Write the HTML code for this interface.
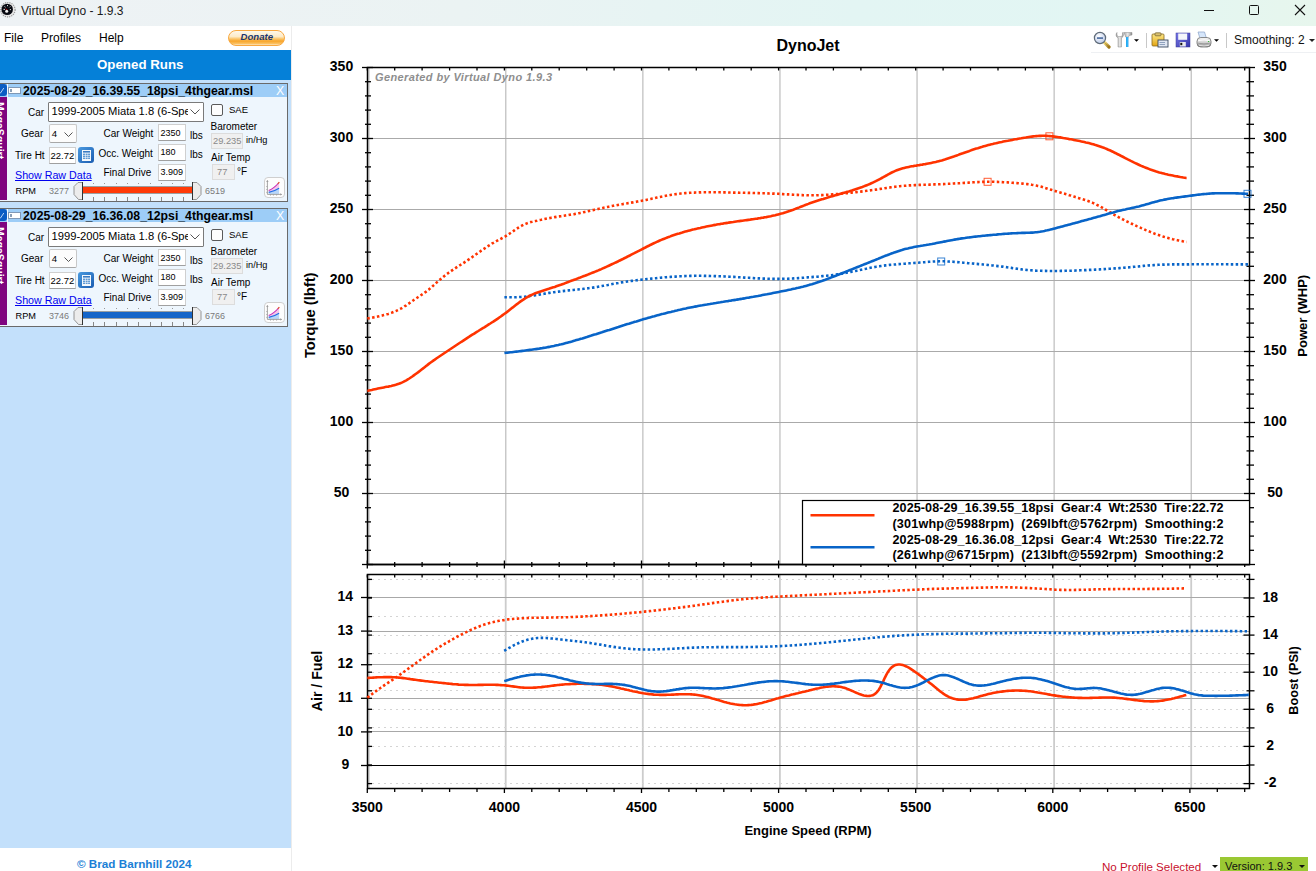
<!DOCTYPE html>
<html><head><meta charset="utf-8"><title>Virtual Dyno</title>
<style>
html,body{margin:0;padding:0;}
body{width:1316px;height:871px;overflow:hidden;position:relative;background:#fff;font-family:"Liberation Sans",sans-serif;color:#000;}
.a{position:absolute;}
.t{position:absolute;white-space:nowrap;line-height:1;}
</style></head><body>
<div class="a" style="left:0;top:0;width:1316px;height:26px;background:linear-gradient(90deg,#eef2f5 0%,#ebf3f3 35%,#e3f5f3 65%,#e2f6f3 85%,#e7f6ed 100%)"></div>
<svg class="a" style="left:0;top:0" width="17" height="20" viewBox="0 0 17 20">
 <circle cx="7.9" cy="9.7" r="7.2" fill="#e8e8e8" stroke="#9a9a9a" stroke-width="1.2" stroke-dasharray="1.2 1"/>
 <circle cx="7.2" cy="9.4" r="5.7" fill="#080a12"/>
 <path d="M3.5 9.4 H5 M4.5 6.5 L5.5 7.2 M7.5 5 V6.2 M10.3 6.5 L9.5 7.3 M11 9.6 H9.8" stroke="#d8d8d8" stroke-width="1"/>
 <path d="M5 8 L6.8 10.5 L7.6 9.8 Z" fill="#c00000"/>
 <circle cx="6.7" cy="11.2" r="1.5" fill="#f4f4f4"/>
</svg>
<div class="t" style="left:21px;top:5px;font-size:12px;color:#1a1a1a">Virtual Dyno - 1.9.3</div>
<div class="a" style="left:1204px;top:10px;width:10px;height:1px;background:#111"></div>
<div class="a" style="left:1249px;top:5px;width:8px;height:8px;border:1.2px solid #111;border-radius:1.5px"></div>
<svg class="a" style="left:1294px;top:4px" width="12" height="12" viewBox="0 0 12 12"><path d="M1 1 L11 11 M11 1 L1 11" stroke="#111" stroke-width="1.1"/></svg>
<!-- menu -->
<div class="t" style="left:4px;top:32px;font-size:12px">File</div>
<div class="t" style="left:41px;top:32px;font-size:12px">Profiles</div>
<div class="t" style="left:99px;top:32px;font-size:12px">Help</div>
<div class="a" style="left:228px;top:30px;width:57px;height:16px;border-radius:8px;background:linear-gradient(#fef8ea 0%,#fdebc8 40%,#fbc870 55%,#f8a52a 72%,#fbc060 90%,#fde6c0 100%);border:1px solid #f8a840;box-sizing:border-box"></div>
<div class="t" style="left:240.5px;top:32.2px;font-size:9.6px;font-weight:bold;font-style:italic;color:#1a3570">Donate</div>
<div class="a" style="left:291px;top:26px;width:1px;height:845px;background:#ececec"></div>
<!-- toolbar -->
<div class="a" style="left:1091px;top:52px;width:225px;height:1px;background:#eef0f3"></div>
<svg class="a" style="left:1092px;top:31px" width="20" height="18" viewBox="0 0 20 18">
 <defs><radialGradient id="mg" cx="0.4" cy="0.35" r="0.7"><stop offset="0" stop-color="#ffffff"/><stop offset="1" stop-color="#b8c8e8"/></radialGradient>
 <linearGradient id="hg" x1="0" y1="0" x2="1" y2="1"><stop offset="0" stop-color="#f5dc7a"/><stop offset="1" stop-color="#a07818"/></linearGradient></defs>
 <path d="M12.5 11.5 L17 16" stroke="url(#hg)" stroke-width="3.2" stroke-linecap="round"/>
 <path d="M12.5 11.5 L17 16" stroke="#6b5414" stroke-width="0.6" fill="none" opacity="0.5"/>
 <circle cx="8" cy="7" r="5.6" fill="url(#mg)" stroke="#5f6b78" stroke-width="1.2"/>
 <rect x="5" y="6.2" width="6" height="1.8" fill="#5a78a8"/>
</svg>
<svg class="a" style="left:1115px;top:31px" width="26" height="18" viewBox="0 0 26 18">
 <defs><linearGradient id="wg" x1="0" y1="0" x2="1" y2="0"><stop offset="0" stop-color="#9a9a9a"/><stop offset="0.5" stop-color="#e8e8e8"/><stop offset="1" stop-color="#8a8a8a"/></linearGradient></defs>
 <path d="M2 1.5 C0.5 3 0.8 6 3 7 L3 16 L6.5 16 L6.5 7 C8.7 6 9 3 7.5 1.5 L7.5 4.5 L6 5.5 L3.5 5.5 L2 4.5 Z" fill="url(#wg)" stroke="#8c8c8c" stroke-width="0.5"/>
 <path d="M8.5 1.5 L17 1.5 L17 4 L14 4.5 L13.5 6 L10.5 6 L10 4 Z" fill="url(#wg)" stroke="#8c8c8c" stroke-width="0.5"/>
 <rect x="11" y="6" width="2.4" height="10" fill="#1a8fe8"/>
 <rect x="11.6" y="6" width="1" height="10" fill="#3fd0ff"/>
 <path d="M19 8.3 L24 8.3 L21.5 10.8 Z" fill="#000"/>
</svg>
<div class="a" style="left:1146px;top:33px;width:1px;height:15px;background:#c8c8c8"></div>
<svg class="a" style="left:1151px;top:32px" width="19" height="16" viewBox="0 0 19 16">
 <defs><linearGradient id="cg" x1="0" y1="0" x2="0" y2="1"><stop offset="0" stop-color="#fde98a"/><stop offset="1" stop-color="#e2a412"/></linearGradient></defs>
 <rect x="1" y="2" width="12" height="12" rx="1" fill="url(#cg)" stroke="#8a6a20" stroke-width="0.8"/>
 <rect x="4" y="0.8" width="6" height="3" rx="0.8" fill="#d9c070" stroke="#6b5a2a" stroke-width="0.7"/>
 <rect x="7" y="8" width="10" height="7" fill="#dfe6f2" stroke="#3a4a60" stroke-width="0.9"/>
 <path d="M8.5 10.5 H14 M8.5 12.5 H14" stroke="#7a90b0" stroke-width="0.8"/>
</svg>
<svg class="a" style="left:1175px;top:32px" width="16" height="16" viewBox="0 0 16 16">
 <defs><linearGradient id="fg" x1="0" y1="0" x2="1" y2="1"><stop offset="0" stop-color="#7a7ae8"/><stop offset="1" stop-color="#3232a8"/></linearGradient></defs>
 <rect x="1" y="1" width="14" height="14" fill="url(#fg)" stroke="#3a3a98" stroke-width="0.5"/>
 <rect x="3.2" y="1.5" width="9" height="6.3" fill="#f4f6fb"/>
 <rect x="4.8" y="10" width="6" height="4.5" fill="#e8e8ee"/>
 <rect x="5.3" y="10.8" width="2" height="2.4" fill="#111"/>
</svg>
<svg class="a" style="left:1196px;top:31px" width="26" height="18" viewBox="0 0 26 18">
 <defs><linearGradient id="pg" x1="0" y1="0" x2="0" y2="1"><stop offset="0" stop-color="#f6f6f6"/><stop offset="0.5" stop-color="#d4d4d4"/><stop offset="1" stop-color="#8c8c8c"/></linearGradient></defs>
 <path d="M2 1 L8.5 1 L10.5 7.5 L4 7.5 Z" fill="#d6e6fa" stroke="#8aa2c8" stroke-width="0.7"/>
 <rect x="1" y="6.5" width="14" height="9.5" rx="3.8" fill="url(#pg)" stroke="#6e6e6e" stroke-width="0.8"/>
 <path d="M2.2 9.6 Q8 8.2 13.8 9.6" stroke="#ffffff" stroke-width="1" fill="none"/>
 <path d="M2.2 12.2 Q8 13.6 13.8 12.2" stroke="#8a8a8a" stroke-width="0.7" fill="none"/>
 <path d="M3 14.3 Q8 15.6 13 14.3" stroke="#f0f0f0" stroke-width="0.8" fill="none"/>
 <rect x="12" y="10" width="1.2" height="1" fill="#3cba3c"/>
 <path d="M18 8.3 L23 8.3 L20.5 10.8 Z" fill="#000"/>
</svg>
<div class="a" style="left:1226px;top:33px;width:1px;height:15px;background:#c8c8c8"></div>
<div class="t" style="left:1234px;top:34px;font-size:12px;color:#111">Smoothing: 2</div>
<svg class="a" style="left:1309px;top:39px" width="7" height="4" viewBox="0 0 7 4"><path d="M0 0 L6 0 L3 3 Z" fill="#222"/></svg>
<!-- status -->
<div class="t" style="left:1102px;top:861px;font-size:11.6px;color:#c8102e">No Profile Selected</div>
<svg class="a" style="left:1212px;top:865px" width="6" height="4" viewBox="0 0 6 4"><path d="M0 0 L6 0 L3 3 Z" fill="#111"/></svg>
<div class="a" style="left:1220px;top:857px;width:88px;height:14px;background:#9ac833"></div>
<div class="t" style="left:1225px;top:861px;font-size:11px;color:#111">Version: 1.9.3</div>
<svg class="a" style="left:1299px;top:865px" width="6" height="4" viewBox="0 0 6 4"><path d="M0 0 L6 0 L3 3 Z" fill="#111"/></svg>

<div class="a" style="left:0;top:50px;width:291px;height:798px;background:#c3e0fb"></div>
<div class="a" style="left:0;top:50px;width:291px;height:30px;background:#0580d8"></div>
<div class="t" style="left:97px;top:58px;font-size:13.3px;font-weight:bold;color:#fff">Opened Runs</div>
<div class="a" style="left:0;top:83px;width:287px;height:117px;background:#eef6fd;border-top:1px solid #6a6a6a;border-right:1px solid #6a6a6a;border-bottom:1px solid #6a6a6a"></div>
<div class="a" style="left:0;top:84px;width:287px;height:13px;background:#9dcdf7"></div>
<div class="t" style="left:23px;top:85px;font-size:12.25px;font-weight:bold;letter-spacing:0px">2025-08-29_16.39.55_18psi_4thgear.msl</div>
<div class="t" style="left:276px;top:85px;font-size:12.3px;color:#fff">X</div>
<div class="a" style="left:7px;top:84px;width:1px;height:13px;background:#f4f9ff"></div>
<div class="a" style="left:8.3px;top:87.2px;width:11px;height:5.2px;background:#fff;border:1px solid #7f98b6"></div>
<div class="a" style="left:10px;top:89px;width:1.5px;height:3px;background:#8aa0b8"></div>
<div class="a" style="left:0;top:84px;width:7px;height:12px;background:#0a5cc4;border-radius:0 3px 3px 0"></div>
<svg class="a" style="left:0;top:86px" width="7" height="8" viewBox="0 0 7 8"><path d="M-1 6 L0.5 7 L3.8 2" stroke="#b8d2f2" stroke-width="1" fill="none"/></svg>
<div class="a" style="left:0;top:97px;width:7px;height:103px;background:#7f047f;overflow:hidden"><div class="t" style="left:-3px;top:5px;font-size:10.5px;font-weight:bold;color:#fff;transform-origin:0 0;transform:translate(8px,0) rotate(90deg)">MegaSquirt</div></div>
<div class="t" style="left:28px;top:108px;font-size:10px">Car</div>
<div class="a" style="left:48px;top:101.5px;width:156px;height:20px;box-sizing:border-box;border:1px solid #7a7a7a;background:#fff;border-radius:1px"></div>
<div class="a" style="left:49px;top:102.5px;width:139px;height:18px;overflow:hidden"><div class="t" style="left:2.5px;top:3.3px;font-size:11.2px">1999-2005 Miata 1.8 (6-Speed)</div></div>
<svg class="a" style="left:190px;top:109px" width="10" height="6" viewBox="0 0 10 6"><path d="M0.5 0.5 L5 5 L9.5 0.5" stroke="#555" stroke-width="1" fill="none"/></svg>
<div class="a" style="left:211px;top:103.5px;width:12px;height:12px;box-sizing:border-box;border:1px solid #5a5a5a;border-radius:2px;background:#fdfdfd"></div>
<div class="t" style="left:229px;top:104.5px;font-size:9.5px">SAE</div>
<div class="t" style="left:21px;top:129px;font-size:10px">Gear</div>
<div class="a" style="left:48.5px;top:123.6px;width:28px;height:19px;box-sizing:border-box;border:1px solid #c8c8c8;border-bottom-color:#a8a8a8;background:#fcfcfc;border-radius:2px"></div>
<div class="t" style="left:51.8px;top:129.3px;font-size:9.6px">4</div>
<svg class="a" style="left:63.5px;top:131.6px" width="9" height="6" viewBox="0 0 9 6"><path d="M0.5 0.5 L4.5 4.5 L8.5 0.5" stroke="#555" stroke-width="1" fill="none"/></svg>
<div class="t" style="left:103.5px;top:129px;font-size:10px">Car Weight</div>
<div class="a" style="left:158px;top:124px;width:28px;height:16.5px;box-sizing:border-box;border:1px solid #cfcfcf;border-bottom-color:#a0a0a0;background:#fff"></div>
<div class="t" style="left:160.5px;top:128.5px;font-size:9px">2350</div>
<div class="t" style="left:190px;top:130.5px;font-size:10px">lbs</div>
<div class="t" style="left:210.5px;top:122px;font-size:10px">Barometer</div>
<div class="a" style="left:211px;top:133px;width:32px;height:16px;box-sizing:border-box;border:1px solid #dcdcdc;background:#f0f0f0"></div>
<div class="t" style="left:213px;top:137px;font-size:9.3px;color:#8a8a8a">29.235</div>
<div class="t" style="left:246px;top:135.5px;font-size:9.2px">in/Hg</div>
<div class="t" style="left:15px;top:151px;font-size:10px">Tire Ht</div>
<div class="a" style="left:48.5px;top:146.5px;width:27.5px;height:17px;box-sizing:border-box;border:1px solid #cfcfcf;border-bottom-color:#a0a0a0;background:#fff"></div>
<div class="t" style="left:50.5px;top:150.5px;font-size:9.5px">22.72</div>
<div class="a" style="left:78px;top:147px;width:16px;height:16px;border-radius:3px;background:linear-gradient(135deg,#4a9ae0,#1a5cb0);"></div>
<svg class="a" style="left:81.5px;top:149.5px" width="9" height="11" viewBox="0 0 9 11"><rect x="0" y="0" width="9" height="11" fill="#f4f8fc"/><rect x="1" y="1" width="7" height="1.6" fill="#3a7cc4"/><g fill="#4f8fd0"><rect x="1" y="3.6" width="2" height="1.3"/><rect x="3.6" y="3.6" width="2" height="1.3"/><rect x="6.1" y="3.6" width="1.9" height="1.3"/><rect x="1" y="5.6" width="2" height="1.3"/><rect x="3.6" y="5.6" width="2" height="1.3"/><rect x="6.1" y="5.6" width="1.9" height="1.3"/><rect x="1" y="7.6" width="2" height="1.3"/><rect x="3.6" y="7.6" width="2" height="1.3"/><rect x="6.1" y="7.6" width="1.9" height="1.3"/></g></svg>
<div class="t" style="left:98.5px;top:149px;font-size:10px">Occ. Weight</div>
<div class="a" style="left:158px;top:144px;width:28px;height:16.5px;box-sizing:border-box;border:1px solid #cfcfcf;border-bottom-color:#a0a0a0;background:#fff"></div>
<div class="t" style="left:160.5px;top:148px;font-size:9px">180</div>
<div class="t" style="left:190px;top:150px;font-size:10px">lbs</div>
<div class="t" style="left:211px;top:153px;font-size:10px">Air Temp</div>
<div class="a" style="left:211.5px;top:164px;width:23px;height:16px;box-sizing:border-box;border:1px solid #dcdcdc;background:#f0f0f0"></div>
<div class="t" style="left:217px;top:168px;font-size:9.3px;color:#8a8a8a">77</div>
<div class="t" style="left:237px;top:166.5px;font-size:10px">°F</div>
<div class="t" style="left:15px;top:169.5px;font-size:10.7px;color:#0000ee;text-decoration:underline">Show Raw Data</div>
<div class="t" style="left:103.5px;top:167.5px;font-size:10px">Final Drive</div>
<div class="a" style="left:158px;top:164px;width:28px;height:16.5px;box-sizing:border-box;border:1px solid #cfcfcf;border-bottom-color:#a0a0a0;background:#fff"></div>
<div class="t" style="left:160.5px;top:168px;font-size:9px">3.909</div>
<div class="t" style="left:15.5px;top:186.5px;font-size:9.2px">RPM</div>
<div class="t" style="left:49px;top:187px;font-size:9px;color:#7a7a7a">3277</div>
<div class="t" style="left:205px;top:187px;font-size:9px;color:#7a7a7a">6519</div>
<div class="a" style="left:0;top:183px;width:1px;height:1px"><div class="a" style="left:93.0px;top:0;width:1px;height:1px;background:#999"></div><div class="a" style="left:104.3px;top:0;width:1px;height:1px;background:#999"></div><div class="a" style="left:115.6px;top:0;width:1px;height:1px;background:#999"></div><div class="a" style="left:126.9px;top:0;width:1px;height:1px;background:#999"></div><div class="a" style="left:138.2px;top:0;width:1px;height:1px;background:#999"></div><div class="a" style="left:149.5px;top:0;width:1px;height:1px;background:#999"></div><div class="a" style="left:160.8px;top:0;width:1px;height:1px;background:#999"></div><div class="a" style="left:172.1px;top:0;width:1px;height:1px;background:#999"></div><div class="a" style="left:183.4px;top:0;width:1px;height:1px;background:#999"></div></div>
<div class="a" style="left:0;top:196.5px;width:1px;height:1px"><div class="a" style="left:93.0px;top:0;width:1px;height:4px;background:#888"></div><div class="a" style="left:104.3px;top:0;width:1px;height:4px;background:#888"></div><div class="a" style="left:115.6px;top:0;width:1px;height:4px;background:#888"></div><div class="a" style="left:126.9px;top:0;width:1px;height:4px;background:#888"></div><div class="a" style="left:138.2px;top:0;width:1px;height:4px;background:#888"></div><div class="a" style="left:149.5px;top:0;width:1px;height:4px;background:#888"></div><div class="a" style="left:160.8px;top:0;width:1px;height:4px;background:#888"></div><div class="a" style="left:172.1px;top:0;width:1px;height:4px;background:#888"></div><div class="a" style="left:183.4px;top:0;width:1px;height:4px;background:#888"></div></div>
<div class="a" style="left:82px;top:186.6px;width:110px;height:6.4px;background:#ff3a08;box-shadow:0 -0.6px 0 #666, 0 0.6px 0 #666"></div>
<svg class="a" style="left:73px;top:182px" width="10" height="18" viewBox="0 0 10 18"><path d="M9.5 0.5 L5 0.5 L1 4.5 L1 12.5 L5.5 17.5 L9.5 17.5" fill="#ececec" stroke="#8a8a8a" stroke-width="0.9"/><line x1="9.5" y1="0" x2="9.5" y2="18" stroke="#333" stroke-width="1"/></svg>
<svg class="a" style="left:192px;top:182px" width="10" height="18" viewBox="0 0 10 18"><path d="M0.5 0.5 L5 0.5 L9 4.5 L9 12.5 L4.5 17.5 L0.5 17.5" fill="#ececec" stroke="#8a8a8a" stroke-width="0.9"/><line x1="0.5" y1="0" x2="0.5" y2="18" stroke="#333" stroke-width="1"/></svg>
<div class="a" style="left:263.5px;top:177.3px;width:21px;height:21px;box-sizing:border-box;border:1px solid #cfcfcf;border-radius:4px;background:#fdfdfd"></div>
<svg class="a" style="left:264px;top:178px" width="21" height="21" viewBox="0 0 21 21"><path d="M4.7 12.6 Q9.4 10.8 15.1 4.5 L15.1 10.2 Q9.8 13.5 4.7 14.4 Z" fill="#f6c6ea"/><path d="M4.7 14.4 Q9.8 13.5 15.1 10.2 L15.1 16.2 L4.7 16.2 Z" fill="#b8d6f8"/><path d="M4.7 12.6 Q9.4 10.8 15.1 4.5" stroke="#c428b8" stroke-width="1.1" fill="none"/><path d="M13.8 5.9 L15.3 4.2" stroke="#e06030" stroke-width="1.2"/><path d="M4.7 14.4 Q9.8 13.5 15.1 10.2" stroke="#1f6ee8" stroke-width="1.1" fill="none"/><path d="M3.4 2.5 V16.4 H17.5" stroke="#9a9a9a" stroke-width="0.9" fill="none"/><path d="M2.2 4 L3.4 2 L4.6 4 Z M16.2 15.2 L18.2 16.4 L16.2 17.6 Z" fill="#9a9a9a"/><path d="M2.3 8.5 H3.4 M2.3 11.5 H3.4 M2.3 14.4 H3.4 M6.5 16.4 V17.6 M9.4 16.4 V17.6 M12.6 16.4 V17.6" stroke="#9a9a9a" stroke-width="0.8"/></svg>
<div class="a" style="left:0;top:208px;width:287px;height:117px;background:#eef6fd;border-top:1px solid #6a6a6a;border-right:1px solid #6a6a6a;border-bottom:1px solid #6a6a6a"></div>
<div class="a" style="left:0;top:209px;width:287px;height:13px;background:#9dcdf7"></div>
<div class="t" style="left:23px;top:210px;font-size:12.25px;font-weight:bold;letter-spacing:0px">2025-08-29_16.36.08_12psi_4thgear.msl</div>
<div class="t" style="left:276px;top:210px;font-size:12.3px;color:#fff">X</div>
<div class="a" style="left:7px;top:209px;width:1px;height:13px;background:#f4f9ff"></div>
<div class="a" style="left:8.3px;top:212.2px;width:11px;height:5.2px;background:#fff;border:1px solid #7f98b6"></div>
<div class="a" style="left:10px;top:214px;width:1.5px;height:3px;background:#8aa0b8"></div>
<div class="a" style="left:0;top:209px;width:7px;height:12px;background:#0a5cc4;border-radius:0 3px 3px 0"></div>
<svg class="a" style="left:0;top:211px" width="7" height="8" viewBox="0 0 7 8"><path d="M-1 6 L0.5 7 L3.8 2" stroke="#b8d2f2" stroke-width="1" fill="none"/></svg>
<div class="a" style="left:0;top:222px;width:7px;height:103px;background:#7f047f;overflow:hidden"><div class="t" style="left:-3px;top:5px;font-size:10.5px;font-weight:bold;color:#fff;transform-origin:0 0;transform:translate(8px,0) rotate(90deg)">MegaSquirt</div></div>
<div class="t" style="left:28px;top:233px;font-size:10px">Car</div>
<div class="a" style="left:48px;top:226.5px;width:156px;height:20px;box-sizing:border-box;border:1px solid #7a7a7a;background:#fff;border-radius:1px"></div>
<div class="a" style="left:49px;top:227.5px;width:139px;height:18px;overflow:hidden"><div class="t" style="left:2.5px;top:3.3px;font-size:11.2px">1999-2005 Miata 1.8 (6-Speed)</div></div>
<svg class="a" style="left:190px;top:234px" width="10" height="6" viewBox="0 0 10 6"><path d="M0.5 0.5 L5 5 L9.5 0.5" stroke="#555" stroke-width="1" fill="none"/></svg>
<div class="a" style="left:211px;top:228.5px;width:12px;height:12px;box-sizing:border-box;border:1px solid #5a5a5a;border-radius:2px;background:#fdfdfd"></div>
<div class="t" style="left:229px;top:229.5px;font-size:9.5px">SAE</div>
<div class="t" style="left:21px;top:254px;font-size:10px">Gear</div>
<div class="a" style="left:48.5px;top:248.6px;width:28px;height:19px;box-sizing:border-box;border:1px solid #c8c8c8;border-bottom-color:#a8a8a8;background:#fcfcfc;border-radius:2px"></div>
<div class="t" style="left:51.8px;top:254.3px;font-size:9.6px">4</div>
<svg class="a" style="left:63.5px;top:256.6px" width="9" height="6" viewBox="0 0 9 6"><path d="M0.5 0.5 L4.5 4.5 L8.5 0.5" stroke="#555" stroke-width="1" fill="none"/></svg>
<div class="t" style="left:103.5px;top:254px;font-size:10px">Car Weight</div>
<div class="a" style="left:158px;top:249px;width:28px;height:16.5px;box-sizing:border-box;border:1px solid #cfcfcf;border-bottom-color:#a0a0a0;background:#fff"></div>
<div class="t" style="left:160.5px;top:253.5px;font-size:9px">2350</div>
<div class="t" style="left:190px;top:255.5px;font-size:10px">lbs</div>
<div class="t" style="left:210.5px;top:247px;font-size:10px">Barometer</div>
<div class="a" style="left:211px;top:258px;width:32px;height:16px;box-sizing:border-box;border:1px solid #dcdcdc;background:#f0f0f0"></div>
<div class="t" style="left:213px;top:262px;font-size:9.3px;color:#8a8a8a">29.235</div>
<div class="t" style="left:246px;top:260.5px;font-size:9.2px">in/Hg</div>
<div class="t" style="left:15px;top:276px;font-size:10px">Tire Ht</div>
<div class="a" style="left:48.5px;top:271.5px;width:27.5px;height:17px;box-sizing:border-box;border:1px solid #cfcfcf;border-bottom-color:#a0a0a0;background:#fff"></div>
<div class="t" style="left:50.5px;top:275.5px;font-size:9.5px">22.72</div>
<div class="a" style="left:78px;top:272px;width:16px;height:16px;border-radius:3px;background:linear-gradient(135deg,#4a9ae0,#1a5cb0);"></div>
<svg class="a" style="left:81.5px;top:274.5px" width="9" height="11" viewBox="0 0 9 11"><rect x="0" y="0" width="9" height="11" fill="#f4f8fc"/><rect x="1" y="1" width="7" height="1.6" fill="#3a7cc4"/><g fill="#4f8fd0"><rect x="1" y="3.6" width="2" height="1.3"/><rect x="3.6" y="3.6" width="2" height="1.3"/><rect x="6.1" y="3.6" width="1.9" height="1.3"/><rect x="1" y="5.6" width="2" height="1.3"/><rect x="3.6" y="5.6" width="2" height="1.3"/><rect x="6.1" y="5.6" width="1.9" height="1.3"/><rect x="1" y="7.6" width="2" height="1.3"/><rect x="3.6" y="7.6" width="2" height="1.3"/><rect x="6.1" y="7.6" width="1.9" height="1.3"/></g></svg>
<div class="t" style="left:98.5px;top:274px;font-size:10px">Occ. Weight</div>
<div class="a" style="left:158px;top:269px;width:28px;height:16.5px;box-sizing:border-box;border:1px solid #cfcfcf;border-bottom-color:#a0a0a0;background:#fff"></div>
<div class="t" style="left:160.5px;top:273px;font-size:9px">180</div>
<div class="t" style="left:190px;top:275px;font-size:10px">lbs</div>
<div class="t" style="left:211px;top:278px;font-size:10px">Air Temp</div>
<div class="a" style="left:211.5px;top:289px;width:23px;height:16px;box-sizing:border-box;border:1px solid #dcdcdc;background:#f0f0f0"></div>
<div class="t" style="left:217px;top:293px;font-size:9.3px;color:#8a8a8a">77</div>
<div class="t" style="left:237px;top:291.5px;font-size:10px">°F</div>
<div class="t" style="left:15px;top:294.5px;font-size:10.7px;color:#0000ee;text-decoration:underline">Show Raw Data</div>
<div class="t" style="left:103.5px;top:292.5px;font-size:10px">Final Drive</div>
<div class="a" style="left:158px;top:289px;width:28px;height:16.5px;box-sizing:border-box;border:1px solid #cfcfcf;border-bottom-color:#a0a0a0;background:#fff"></div>
<div class="t" style="left:160.5px;top:293px;font-size:9px">3.909</div>
<div class="t" style="left:15.5px;top:311.5px;font-size:9.2px">RPM</div>
<div class="t" style="left:49px;top:312px;font-size:9px;color:#7a7a7a">3746</div>
<div class="t" style="left:205px;top:312px;font-size:9px;color:#7a7a7a">6766</div>
<div class="a" style="left:0;top:308px;width:1px;height:1px"><div class="a" style="left:93.0px;top:0;width:1px;height:1px;background:#999"></div><div class="a" style="left:104.3px;top:0;width:1px;height:1px;background:#999"></div><div class="a" style="left:115.6px;top:0;width:1px;height:1px;background:#999"></div><div class="a" style="left:126.9px;top:0;width:1px;height:1px;background:#999"></div><div class="a" style="left:138.2px;top:0;width:1px;height:1px;background:#999"></div><div class="a" style="left:149.5px;top:0;width:1px;height:1px;background:#999"></div><div class="a" style="left:160.8px;top:0;width:1px;height:1px;background:#999"></div><div class="a" style="left:172.1px;top:0;width:1px;height:1px;background:#999"></div><div class="a" style="left:183.4px;top:0;width:1px;height:1px;background:#999"></div></div>
<div class="a" style="left:0;top:321.5px;width:1px;height:1px"><div class="a" style="left:93.0px;top:0;width:1px;height:4px;background:#888"></div><div class="a" style="left:104.3px;top:0;width:1px;height:4px;background:#888"></div><div class="a" style="left:115.6px;top:0;width:1px;height:4px;background:#888"></div><div class="a" style="left:126.9px;top:0;width:1px;height:4px;background:#888"></div><div class="a" style="left:138.2px;top:0;width:1px;height:4px;background:#888"></div><div class="a" style="left:149.5px;top:0;width:1px;height:4px;background:#888"></div><div class="a" style="left:160.8px;top:0;width:1px;height:4px;background:#888"></div><div class="a" style="left:172.1px;top:0;width:1px;height:4px;background:#888"></div><div class="a" style="left:183.4px;top:0;width:1px;height:4px;background:#888"></div></div>
<div class="a" style="left:82px;top:311.6px;width:110px;height:6.4px;background:#1565c8;box-shadow:0 -0.6px 0 #666, 0 0.6px 0 #666"></div>
<svg class="a" style="left:73px;top:307px" width="10" height="18" viewBox="0 0 10 18"><path d="M9.5 0.5 L5 0.5 L1 4.5 L1 12.5 L5.5 17.5 L9.5 17.5" fill="#ececec" stroke="#8a8a8a" stroke-width="0.9"/><line x1="9.5" y1="0" x2="9.5" y2="18" stroke="#333" stroke-width="1"/></svg>
<svg class="a" style="left:192px;top:307px" width="10" height="18" viewBox="0 0 10 18"><path d="M0.5 0.5 L5 0.5 L9 4.5 L9 12.5 L4.5 17.5 L0.5 17.5" fill="#ececec" stroke="#8a8a8a" stroke-width="0.9"/><line x1="0.5" y1="0" x2="0.5" y2="18" stroke="#333" stroke-width="1"/></svg>
<div class="a" style="left:263.5px;top:302.3px;width:21px;height:21px;box-sizing:border-box;border:1px solid #cfcfcf;border-radius:4px;background:#fdfdfd"></div>
<svg class="a" style="left:264px;top:303px" width="21" height="21" viewBox="0 0 21 21"><path d="M4.7 12.6 Q9.4 10.8 15.1 4.5 L15.1 10.2 Q9.8 13.5 4.7 14.4 Z" fill="#f6c6ea"/><path d="M4.7 14.4 Q9.8 13.5 15.1 10.2 L15.1 16.2 L4.7 16.2 Z" fill="#b8d6f8"/><path d="M4.7 12.6 Q9.4 10.8 15.1 4.5" stroke="#c428b8" stroke-width="1.1" fill="none"/><path d="M13.8 5.9 L15.3 4.2" stroke="#e06030" stroke-width="1.2"/><path d="M4.7 14.4 Q9.8 13.5 15.1 10.2" stroke="#1f6ee8" stroke-width="1.1" fill="none"/><path d="M3.4 2.5 V16.4 H17.5" stroke="#9a9a9a" stroke-width="0.9" fill="none"/><path d="M2.2 4 L3.4 2 L4.6 4 Z M16.2 15.2 L18.2 16.4 L16.2 17.6 Z" fill="#9a9a9a"/><path d="M2.3 8.5 H3.4 M2.3 11.5 H3.4 M2.3 14.4 H3.4 M6.5 16.4 V17.6 M9.4 16.4 V17.6 M12.6 16.4 V17.6" stroke="#9a9a9a" stroke-width="0.8"/></svg>
<div class="t" style="left:77px;top:858px;font-size:11.7px;font-weight:bold;color:#1b7fd6">© Brad Barnhill 2024</div>
<svg class="a" style="left:0;top:0" width="1316" height="871" viewBox="0 0 1316 871">
<line x1="505.75" y1="67.5" x2="505.75" y2="564.5" stroke="#c6c6c6" stroke-width="1.4"/>
<line x1="642.85" y1="67.5" x2="642.85" y2="564.5" stroke="#c6c6c6" stroke-width="1.4"/>
<line x1="779.95" y1="67.5" x2="779.95" y2="564.5" stroke="#c6c6c6" stroke-width="1.4"/>
<line x1="917.05" y1="67.5" x2="917.05" y2="564.5" stroke="#c6c6c6" stroke-width="1.4"/>
<line x1="1054.15" y1="67.5" x2="1054.15" y2="564.5" stroke="#c6c6c6" stroke-width="1.4"/>
<line x1="1191.25" y1="67.5" x2="1191.25" y2="564.5" stroke="#c6c6c6" stroke-width="1.4"/>
<line x1="367.5" y1="493.5" x2="1249.5" y2="493.5" stroke="#aaaaaa" stroke-width="1.2"/>
<line x1="367.5" y1="422.5" x2="1249.5" y2="422.5" stroke="#aaaaaa" stroke-width="1.2"/>
<line x1="367.5" y1="351.5" x2="1249.5" y2="351.5" stroke="#aaaaaa" stroke-width="1.2"/>
<line x1="367.5" y1="280.5" x2="1249.5" y2="280.5" stroke="#aaaaaa" stroke-width="1.2"/>
<line x1="367.5" y1="209.5" x2="1249.5" y2="209.5" stroke="#aaaaaa" stroke-width="1.2"/>
<line x1="367.5" y1="138.5" x2="1249.5" y2="138.5" stroke="#aaaaaa" stroke-width="1.2"/>
<line x1="367.5" y1="67.5" x2="1249.5" y2="67.5" stroke="#aaaaaa" stroke-width="1.2"/>
<line x1="369.0" y1="67.5" x2="369.0" y2="564.5" stroke="#dcdcdc" stroke-width="2"/>
<line x1="362" y1="564.5" x2="373" y2="564.5" stroke="#000" stroke-width="1.3"/>
<line x1="1244" y1="564.5" x2="1255" y2="564.5" stroke="#000" stroke-width="1.3"/>
<line x1="365" y1="550.3" x2="371" y2="550.3" stroke="#000" stroke-width="1.3"/>
<line x1="1246.5" y1="550.3" x2="1254" y2="550.3" stroke="#000" stroke-width="1.3"/>
<line x1="365" y1="536.1" x2="371" y2="536.1" stroke="#000" stroke-width="1.3"/>
<line x1="1246.5" y1="536.1" x2="1254" y2="536.1" stroke="#000" stroke-width="1.3"/>
<line x1="365" y1="521.9" x2="371" y2="521.9" stroke="#000" stroke-width="1.3"/>
<line x1="1246.5" y1="521.9" x2="1254" y2="521.9" stroke="#000" stroke-width="1.3"/>
<line x1="365" y1="507.7" x2="371" y2="507.7" stroke="#000" stroke-width="1.3"/>
<line x1="1246.5" y1="507.7" x2="1254" y2="507.7" stroke="#000" stroke-width="1.3"/>
<line x1="362" y1="493.5" x2="373" y2="493.5" stroke="#000" stroke-width="1.3"/>
<line x1="1244" y1="493.5" x2="1255" y2="493.5" stroke="#000" stroke-width="1.3"/>
<line x1="365" y1="479.3" x2="371" y2="479.3" stroke="#000" stroke-width="1.3"/>
<line x1="1246.5" y1="479.3" x2="1254" y2="479.3" stroke="#000" stroke-width="1.3"/>
<line x1="365" y1="465.1" x2="371" y2="465.1" stroke="#000" stroke-width="1.3"/>
<line x1="1246.5" y1="465.1" x2="1254" y2="465.1" stroke="#000" stroke-width="1.3"/>
<line x1="365" y1="450.9" x2="371" y2="450.9" stroke="#000" stroke-width="1.3"/>
<line x1="1246.5" y1="450.9" x2="1254" y2="450.9" stroke="#000" stroke-width="1.3"/>
<line x1="365" y1="436.7" x2="371" y2="436.7" stroke="#000" stroke-width="1.3"/>
<line x1="1246.5" y1="436.7" x2="1254" y2="436.7" stroke="#000" stroke-width="1.3"/>
<line x1="362" y1="422.5" x2="373" y2="422.5" stroke="#000" stroke-width="1.3"/>
<line x1="1244" y1="422.5" x2="1255" y2="422.5" stroke="#000" stroke-width="1.3"/>
<line x1="365" y1="408.3" x2="371" y2="408.3" stroke="#000" stroke-width="1.3"/>
<line x1="1246.5" y1="408.3" x2="1254" y2="408.3" stroke="#000" stroke-width="1.3"/>
<line x1="365" y1="394.1" x2="371" y2="394.1" stroke="#000" stroke-width="1.3"/>
<line x1="1246.5" y1="394.1" x2="1254" y2="394.1" stroke="#000" stroke-width="1.3"/>
<line x1="365" y1="379.9" x2="371" y2="379.9" stroke="#000" stroke-width="1.3"/>
<line x1="1246.5" y1="379.9" x2="1254" y2="379.9" stroke="#000" stroke-width="1.3"/>
<line x1="365" y1="365.7" x2="371" y2="365.7" stroke="#000" stroke-width="1.3"/>
<line x1="1246.5" y1="365.7" x2="1254" y2="365.7" stroke="#000" stroke-width="1.3"/>
<line x1="362" y1="351.5" x2="373" y2="351.5" stroke="#000" stroke-width="1.3"/>
<line x1="1244" y1="351.5" x2="1255" y2="351.5" stroke="#000" stroke-width="1.3"/>
<line x1="365" y1="337.3" x2="371" y2="337.3" stroke="#000" stroke-width="1.3"/>
<line x1="1246.5" y1="337.3" x2="1254" y2="337.3" stroke="#000" stroke-width="1.3"/>
<line x1="365" y1="323.1" x2="371" y2="323.1" stroke="#000" stroke-width="1.3"/>
<line x1="1246.5" y1="323.1" x2="1254" y2="323.1" stroke="#000" stroke-width="1.3"/>
<line x1="365" y1="308.9" x2="371" y2="308.9" stroke="#000" stroke-width="1.3"/>
<line x1="1246.5" y1="308.9" x2="1254" y2="308.9" stroke="#000" stroke-width="1.3"/>
<line x1="365" y1="294.7" x2="371" y2="294.7" stroke="#000" stroke-width="1.3"/>
<line x1="1246.5" y1="294.7" x2="1254" y2="294.7" stroke="#000" stroke-width="1.3"/>
<line x1="362" y1="280.5" x2="373" y2="280.5" stroke="#000" stroke-width="1.3"/>
<line x1="1244" y1="280.5" x2="1255" y2="280.5" stroke="#000" stroke-width="1.3"/>
<line x1="365" y1="266.3" x2="371" y2="266.3" stroke="#000" stroke-width="1.3"/>
<line x1="1246.5" y1="266.3" x2="1254" y2="266.3" stroke="#000" stroke-width="1.3"/>
<line x1="365" y1="252.1" x2="371" y2="252.1" stroke="#000" stroke-width="1.3"/>
<line x1="1246.5" y1="252.1" x2="1254" y2="252.1" stroke="#000" stroke-width="1.3"/>
<line x1="365" y1="237.9" x2="371" y2="237.9" stroke="#000" stroke-width="1.3"/>
<line x1="1246.5" y1="237.9" x2="1254" y2="237.9" stroke="#000" stroke-width="1.3"/>
<line x1="365" y1="223.7" x2="371" y2="223.7" stroke="#000" stroke-width="1.3"/>
<line x1="1246.5" y1="223.7" x2="1254" y2="223.7" stroke="#000" stroke-width="1.3"/>
<line x1="362" y1="209.5" x2="373" y2="209.5" stroke="#000" stroke-width="1.3"/>
<line x1="1244" y1="209.5" x2="1255" y2="209.5" stroke="#000" stroke-width="1.3"/>
<line x1="365" y1="195.3" x2="371" y2="195.3" stroke="#000" stroke-width="1.3"/>
<line x1="1246.5" y1="195.3" x2="1254" y2="195.3" stroke="#000" stroke-width="1.3"/>
<line x1="365" y1="181.1" x2="371" y2="181.1" stroke="#000" stroke-width="1.3"/>
<line x1="1246.5" y1="181.1" x2="1254" y2="181.1" stroke="#000" stroke-width="1.3"/>
<line x1="365" y1="166.9" x2="371" y2="166.9" stroke="#000" stroke-width="1.3"/>
<line x1="1246.5" y1="166.9" x2="1254" y2="166.9" stroke="#000" stroke-width="1.3"/>
<line x1="365" y1="152.7" x2="371" y2="152.7" stroke="#000" stroke-width="1.3"/>
<line x1="1246.5" y1="152.7" x2="1254" y2="152.7" stroke="#000" stroke-width="1.3"/>
<line x1="362" y1="138.5" x2="373" y2="138.5" stroke="#000" stroke-width="1.3"/>
<line x1="1244" y1="138.5" x2="1255" y2="138.5" stroke="#000" stroke-width="1.3"/>
<line x1="365" y1="124.3" x2="371" y2="124.3" stroke="#000" stroke-width="1.3"/>
<line x1="1246.5" y1="124.3" x2="1254" y2="124.3" stroke="#000" stroke-width="1.3"/>
<line x1="365" y1="110.1" x2="371" y2="110.1" stroke="#000" stroke-width="1.3"/>
<line x1="1246.5" y1="110.1" x2="1254" y2="110.1" stroke="#000" stroke-width="1.3"/>
<line x1="365" y1="95.9" x2="371" y2="95.9" stroke="#000" stroke-width="1.3"/>
<line x1="1246.5" y1="95.9" x2="1254" y2="95.9" stroke="#000" stroke-width="1.3"/>
<line x1="365" y1="81.7" x2="371" y2="81.7" stroke="#000" stroke-width="1.3"/>
<line x1="1246.5" y1="81.7" x2="1254" y2="81.7" stroke="#000" stroke-width="1.3"/>
<line x1="362" y1="67.5" x2="373" y2="67.5" stroke="#000" stroke-width="1.3"/>
<line x1="1244" y1="67.5" x2="1255" y2="67.5" stroke="#000" stroke-width="1.3"/>
<line x1="367.3" y1="67.5" x2="367.3" y2="70.5" stroke="#000" stroke-width="1.3"/>
<line x1="367.3" y1="560.5" x2="367.3" y2="568.5" stroke="#000" stroke-width="1.3"/>
<line x1="394.7" y1="67.5" x2="394.7" y2="70.5" stroke="#000" stroke-width="1.3"/>
<line x1="394.7" y1="562.0" x2="394.7" y2="567.0" stroke="#000" stroke-width="1.3"/>
<line x1="422.1" y1="67.5" x2="422.1" y2="70.5" stroke="#000" stroke-width="1.3"/>
<line x1="422.1" y1="562.0" x2="422.1" y2="567.0" stroke="#000" stroke-width="1.3"/>
<line x1="449.6" y1="67.5" x2="449.6" y2="70.5" stroke="#000" stroke-width="1.3"/>
<line x1="449.6" y1="562.0" x2="449.6" y2="567.0" stroke="#000" stroke-width="1.3"/>
<line x1="477.0" y1="67.5" x2="477.0" y2="70.5" stroke="#000" stroke-width="1.3"/>
<line x1="477.0" y1="562.0" x2="477.0" y2="567.0" stroke="#000" stroke-width="1.3"/>
<line x1="504.4" y1="67.5" x2="504.4" y2="70.5" stroke="#000" stroke-width="1.3"/>
<line x1="504.4" y1="560.5" x2="504.4" y2="568.5" stroke="#000" stroke-width="1.3"/>
<line x1="531.8" y1="67.5" x2="531.8" y2="70.5" stroke="#000" stroke-width="1.3"/>
<line x1="531.8" y1="562.0" x2="531.8" y2="567.0" stroke="#000" stroke-width="1.3"/>
<line x1="559.2" y1="67.5" x2="559.2" y2="70.5" stroke="#000" stroke-width="1.3"/>
<line x1="559.2" y1="562.0" x2="559.2" y2="567.0" stroke="#000" stroke-width="1.3"/>
<line x1="586.7" y1="67.5" x2="586.7" y2="70.5" stroke="#000" stroke-width="1.3"/>
<line x1="586.7" y1="562.0" x2="586.7" y2="567.0" stroke="#000" stroke-width="1.3"/>
<line x1="614.1" y1="67.5" x2="614.1" y2="70.5" stroke="#000" stroke-width="1.3"/>
<line x1="614.1" y1="562.0" x2="614.1" y2="567.0" stroke="#000" stroke-width="1.3"/>
<line x1="641.5" y1="67.5" x2="641.5" y2="70.5" stroke="#000" stroke-width="1.3"/>
<line x1="641.5" y1="560.5" x2="641.5" y2="568.5" stroke="#000" stroke-width="1.3"/>
<line x1="668.9" y1="67.5" x2="668.9" y2="70.5" stroke="#000" stroke-width="1.3"/>
<line x1="668.9" y1="562.0" x2="668.9" y2="567.0" stroke="#000" stroke-width="1.3"/>
<line x1="696.3" y1="67.5" x2="696.3" y2="70.5" stroke="#000" stroke-width="1.3"/>
<line x1="696.3" y1="562.0" x2="696.3" y2="567.0" stroke="#000" stroke-width="1.3"/>
<line x1="723.8" y1="67.5" x2="723.8" y2="70.5" stroke="#000" stroke-width="1.3"/>
<line x1="723.8" y1="562.0" x2="723.8" y2="567.0" stroke="#000" stroke-width="1.3"/>
<line x1="751.2" y1="67.5" x2="751.2" y2="70.5" stroke="#000" stroke-width="1.3"/>
<line x1="751.2" y1="562.0" x2="751.2" y2="567.0" stroke="#000" stroke-width="1.3"/>
<line x1="778.6" y1="67.5" x2="778.6" y2="70.5" stroke="#000" stroke-width="1.3"/>
<line x1="778.6" y1="560.5" x2="778.6" y2="568.5" stroke="#000" stroke-width="1.3"/>
<line x1="806.0" y1="67.5" x2="806.0" y2="70.5" stroke="#000" stroke-width="1.3"/>
<line x1="806.0" y1="562.0" x2="806.0" y2="567.0" stroke="#000" stroke-width="1.3"/>
<line x1="833.4" y1="67.5" x2="833.4" y2="70.5" stroke="#000" stroke-width="1.3"/>
<line x1="833.4" y1="562.0" x2="833.4" y2="567.0" stroke="#000" stroke-width="1.3"/>
<line x1="860.9" y1="67.5" x2="860.9" y2="70.5" stroke="#000" stroke-width="1.3"/>
<line x1="860.9" y1="562.0" x2="860.9" y2="567.0" stroke="#000" stroke-width="1.3"/>
<line x1="888.3" y1="67.5" x2="888.3" y2="70.5" stroke="#000" stroke-width="1.3"/>
<line x1="888.3" y1="562.0" x2="888.3" y2="567.0" stroke="#000" stroke-width="1.3"/>
<line x1="915.7" y1="67.5" x2="915.7" y2="70.5" stroke="#000" stroke-width="1.3"/>
<line x1="915.7" y1="560.5" x2="915.7" y2="568.5" stroke="#000" stroke-width="1.3"/>
<line x1="943.1" y1="67.5" x2="943.1" y2="70.5" stroke="#000" stroke-width="1.3"/>
<line x1="943.1" y1="562.0" x2="943.1" y2="567.0" stroke="#000" stroke-width="1.3"/>
<line x1="970.5" y1="67.5" x2="970.5" y2="70.5" stroke="#000" stroke-width="1.3"/>
<line x1="970.5" y1="562.0" x2="970.5" y2="567.0" stroke="#000" stroke-width="1.3"/>
<line x1="998.0" y1="67.5" x2="998.0" y2="70.5" stroke="#000" stroke-width="1.3"/>
<line x1="998.0" y1="562.0" x2="998.0" y2="567.0" stroke="#000" stroke-width="1.3"/>
<line x1="1025.4" y1="67.5" x2="1025.4" y2="70.5" stroke="#000" stroke-width="1.3"/>
<line x1="1025.4" y1="562.0" x2="1025.4" y2="567.0" stroke="#000" stroke-width="1.3"/>
<line x1="1052.8" y1="67.5" x2="1052.8" y2="70.5" stroke="#000" stroke-width="1.3"/>
<line x1="1052.8" y1="560.5" x2="1052.8" y2="568.5" stroke="#000" stroke-width="1.3"/>
<line x1="1080.2" y1="67.5" x2="1080.2" y2="70.5" stroke="#000" stroke-width="1.3"/>
<line x1="1080.2" y1="562.0" x2="1080.2" y2="567.0" stroke="#000" stroke-width="1.3"/>
<line x1="1107.6" y1="67.5" x2="1107.6" y2="70.5" stroke="#000" stroke-width="1.3"/>
<line x1="1107.6" y1="562.0" x2="1107.6" y2="567.0" stroke="#000" stroke-width="1.3"/>
<line x1="1135.1" y1="67.5" x2="1135.1" y2="70.5" stroke="#000" stroke-width="1.3"/>
<line x1="1135.1" y1="562.0" x2="1135.1" y2="567.0" stroke="#000" stroke-width="1.3"/>
<line x1="1162.5" y1="67.5" x2="1162.5" y2="70.5" stroke="#000" stroke-width="1.3"/>
<line x1="1162.5" y1="562.0" x2="1162.5" y2="567.0" stroke="#000" stroke-width="1.3"/>
<line x1="1189.9" y1="67.5" x2="1189.9" y2="70.5" stroke="#000" stroke-width="1.3"/>
<line x1="1189.9" y1="560.5" x2="1189.9" y2="568.5" stroke="#000" stroke-width="1.3"/>
<line x1="1217.3" y1="67.5" x2="1217.3" y2="70.5" stroke="#000" stroke-width="1.3"/>
<line x1="1217.3" y1="562.0" x2="1217.3" y2="567.0" stroke="#000" stroke-width="1.3"/>
<line x1="1244.7" y1="67.5" x2="1244.7" y2="70.5" stroke="#000" stroke-width="1.3"/>
<line x1="1244.7" y1="562.0" x2="1244.7" y2="567.0" stroke="#000" stroke-width="1.3"/>
<rect x="367.5" y="67.5" width="882.0" height="497.0" fill="none" stroke="#000" stroke-width="1.5"/>
<text x="375" y="81" font-family="Liberation Sans" font-style="italic" font-weight="bold" font-size="11" fill="#8e8e8e" textLength="177" lengthAdjust="spacing">Generated by Virtual Dyno 1.9.3</text>
<text x="341.5" y="496.9" text-anchor="middle" font-family="Liberation Sans" font-weight="bold" font-size="14">50</text>
<text x="1275" y="496.9" text-anchor="middle" font-family="Liberation Sans" font-weight="bold" font-size="14">50</text>
<text x="341.5" y="425.9" text-anchor="middle" font-family="Liberation Sans" font-weight="bold" font-size="14">100</text>
<text x="1275" y="425.9" text-anchor="middle" font-family="Liberation Sans" font-weight="bold" font-size="14">100</text>
<text x="341.5" y="354.9" text-anchor="middle" font-family="Liberation Sans" font-weight="bold" font-size="14">150</text>
<text x="1275" y="354.9" text-anchor="middle" font-family="Liberation Sans" font-weight="bold" font-size="14">150</text>
<text x="341.5" y="283.9" text-anchor="middle" font-family="Liberation Sans" font-weight="bold" font-size="14">200</text>
<text x="1275" y="283.9" text-anchor="middle" font-family="Liberation Sans" font-weight="bold" font-size="14">200</text>
<text x="341.5" y="212.9" text-anchor="middle" font-family="Liberation Sans" font-weight="bold" font-size="14">250</text>
<text x="1275" y="212.9" text-anchor="middle" font-family="Liberation Sans" font-weight="bold" font-size="14">250</text>
<text x="341.5" y="141.9" text-anchor="middle" font-family="Liberation Sans" font-weight="bold" font-size="14">300</text>
<text x="1275" y="141.9" text-anchor="middle" font-family="Liberation Sans" font-weight="bold" font-size="14">300</text>
<text x="341.5" y="70.9" text-anchor="middle" font-family="Liberation Sans" font-weight="bold" font-size="14">350</text>
<text x="1275" y="70.9" text-anchor="middle" font-family="Liberation Sans" font-weight="bold" font-size="14">350</text>
<text transform="translate(315.2,315.3) rotate(-90)" x="-42.75" font-family="Liberation Sans" font-weight="bold" font-size="15.3" textLength="85.5" lengthAdjust="spacingAndGlyphs">Torque (lbft)</text>
<text transform="translate(1307.3,315.8) rotate(-90)" x="-41" font-family="Liberation Sans" font-weight="bold" font-size="13.6" textLength="82" lengthAdjust="spacingAndGlyphs">Power (WHP)</text>
<text x="808" y="51" text-anchor="middle" font-family="Liberation Sans" font-weight="bold" font-size="16">DynoJet</text>
<path d="M367.3,318.6 L368.8,318.3 L370.3,318.0 L371.8,317.7 L373.3,317.4 L374.8,317.1 L376.3,316.8 L377.8,316.5 L379.3,316.2 L380.8,315.8 L382.3,315.5 L383.8,315.1 L385.3,314.7 L386.8,314.3 L388.3,313.9 L389.8,313.4 L391.3,312.9 L392.8,312.3 L394.3,311.7 L395.8,311.1 L397.3,310.4 L398.8,309.7 L400.3,308.9 L401.8,308.1 L403.3,307.2 L404.8,306.2 L406.3,305.3 L407.8,304.2 L409.3,303.2 L410.8,302.1 L412.3,301.1 L413.8,300.0 L415.3,299.0 L416.8,298.0 L418.3,297.0 L419.8,296.0 L421.3,295.0 L422.8,294.0 L424.3,292.9 L425.8,291.9 L427.3,290.7 L428.8,289.6 L430.3,288.3 L431.8,287.0 L433.3,285.6 L434.8,284.3 L436.3,282.9 L437.8,281.5 L439.3,280.2 L440.8,278.9 L442.3,277.7 L443.8,276.4 L445.3,275.3 L446.8,274.1 L448.3,273.0 L449.8,271.9 L451.3,270.9 L452.8,269.9 L454.3,268.9 L455.8,267.9 L457.3,266.9 L458.8,266.0 L460.3,265.0 L461.8,264.1 L463.3,263.1 L464.8,262.1 L466.3,261.1 L467.8,260.1 L469.3,259.1 L470.8,258.1 L472.3,257.0 L473.8,256.0 L475.3,254.9 L476.8,253.8 L478.3,252.8 L479.8,251.7 L481.3,250.6 L482.8,249.6 L484.3,248.6 L485.8,247.6 L487.3,246.6 L488.8,245.6 L490.3,244.7 L491.8,243.7 L493.3,242.9 L494.8,242.0 L496.3,241.2 L497.8,240.4 L499.3,239.6 L500.8,238.8 L502.3,238.0 L503.8,237.2 L505.3,236.4 L506.8,235.4 L508.3,234.5 L509.8,233.5 L511.3,232.5 L512.8,231.5 L514.3,230.4 L515.8,229.4 L517.3,228.4 L518.8,227.4 L520.3,226.5 L521.8,225.7 L523.3,224.9 L524.8,224.2 L526.3,223.6 L527.8,223.0 L529.3,222.6 L530.8,222.1 L532.3,221.8 L533.8,221.4 L535.3,221.1 L536.8,220.8 L538.3,220.4 L539.8,220.1 L541.3,219.8 L542.8,219.4 L544.3,219.1 L545.8,218.8 L547.3,218.5 L548.8,218.2 L550.3,217.9 L551.8,217.6 L553.3,217.4 L554.8,217.1 L556.3,216.9 L557.8,216.6 L559.3,216.4 L560.8,216.2 L562.3,216.0 L563.8,215.8 L565.3,215.5 L566.8,215.3 L568.3,215.1 L569.8,214.8 L571.3,214.6 L572.8,214.3 L574.3,214.1 L575.8,213.8 L577.3,213.5 L578.8,213.2 L580.3,212.9 L581.8,212.6 L583.3,212.2 L584.8,211.9 L586.3,211.6 L587.8,211.2 L589.3,210.9 L590.8,210.6 L592.3,210.2 L593.8,209.9 L595.3,209.5 L596.8,209.2 L598.3,208.9 L599.8,208.6 L601.3,208.2 L602.8,207.9 L604.3,207.6 L605.8,207.3 L607.3,207.0 L608.8,206.7 L610.3,206.4 L611.8,206.1 L613.3,205.8 L614.8,205.5 L616.3,205.3 L617.8,205.0 L619.3,204.7 L620.8,204.4 L622.3,204.2 L623.8,203.9 L625.3,203.7 L626.8,203.4 L628.3,203.1 L629.8,202.9 L631.3,202.6 L632.8,202.4 L634.3,202.1 L635.8,201.9 L637.3,201.6 L638.8,201.3 L640.3,201.0 L641.8,200.7 L643.3,200.5 L644.8,200.2 L646.3,199.9 L647.8,199.5 L649.3,199.2 L650.8,198.9 L652.3,198.6 L653.8,198.3 L655.3,197.9 L656.8,197.6 L658.3,197.3 L659.8,197.0 L661.3,196.7 L662.8,196.4 L664.3,196.1 L665.8,195.8 L667.3,195.5 L668.8,195.3 L670.3,195.0 L671.8,194.7 L673.3,194.5 L674.8,194.3 L676.3,194.1 L677.8,193.9 L679.3,193.7 L680.8,193.5 L682.3,193.4 L683.8,193.3 L685.3,193.1 L686.8,193.0 L688.3,192.9 L689.8,192.8 L691.3,192.7 L692.8,192.6 L694.3,192.6 L695.8,192.5 L697.3,192.5 L698.8,192.4 L700.3,192.4 L701.8,192.3 L703.3,192.3 L704.8,192.3 L706.3,192.3 L707.8,192.3 L709.3,192.3 L710.8,192.3 L712.3,192.3 L713.8,192.3 L715.3,192.3 L716.8,192.3 L718.3,192.3 L719.8,192.3 L721.3,192.4 L722.8,192.4 L724.3,192.4 L725.8,192.4 L727.3,192.4 L728.8,192.5 L730.3,192.5 L731.8,192.5 L733.3,192.6 L734.8,192.6 L736.3,192.6 L737.8,192.6 L739.3,192.7 L740.8,192.7 L742.3,192.7 L743.8,192.8 L745.3,192.8 L746.8,192.8 L748.3,192.9 L749.8,192.9 L751.3,192.9 L752.8,193.0 L754.3,193.0 L755.8,193.0 L757.3,193.1 L758.8,193.1 L760.3,193.2 L761.8,193.2 L763.3,193.2 L764.8,193.3 L766.3,193.3 L767.8,193.4 L769.3,193.5 L770.8,193.5 L772.3,193.6 L773.8,193.6 L775.3,193.7 L776.8,193.8 L778.3,193.8 L779.8,193.9 L781.3,194.0 L782.8,194.1 L784.3,194.2 L785.8,194.3 L787.3,194.4 L788.8,194.4 L790.3,194.5 L791.8,194.6 L793.3,194.7 L794.8,194.8 L796.3,194.9 L797.8,194.9 L799.3,195.0 L800.8,195.1 L802.3,195.1 L803.8,195.2 L805.3,195.2 L806.8,195.3 L808.3,195.3 L809.8,195.3 L811.3,195.3 L812.8,195.3 L814.3,195.3 L815.8,195.3 L817.3,195.2 L818.8,195.2 L820.3,195.1 L821.8,195.1 L823.3,195.0 L824.8,194.9 L826.3,194.8 L827.8,194.8 L829.3,194.7 L830.8,194.6 L832.3,194.4 L833.8,194.3 L835.3,194.2 L836.8,194.1 L838.3,194.0 L839.8,193.8 L841.3,193.7 L842.8,193.5 L844.3,193.4 L845.8,193.3 L847.3,193.1 L848.8,193.0 L850.3,192.8 L851.8,192.6 L853.3,192.5 L854.8,192.3 L856.3,192.1 L857.8,192.0 L859.3,191.8 L860.8,191.6 L862.3,191.4 L863.8,191.2 L865.3,191.0 L866.8,190.8 L868.3,190.6 L869.8,190.4 L871.3,190.2 L872.8,190.0 L874.3,189.8 L875.8,189.6 L877.3,189.4 L878.8,189.1 L880.3,188.9 L881.8,188.7 L883.3,188.5 L884.8,188.2 L886.3,188.0 L887.8,187.8 L889.3,187.6 L890.8,187.3 L892.3,187.1 L893.8,186.9 L895.3,186.7 L896.8,186.5 L898.3,186.4 L899.8,186.2 L901.3,186.0 L902.8,185.9 L904.3,185.8 L905.8,185.7 L907.3,185.5 L908.8,185.4 L910.3,185.4 L911.8,185.3 L913.3,185.2 L914.8,185.1 L916.3,185.1 L917.8,185.0 L919.3,184.9 L920.8,184.9 L922.3,184.8 L923.8,184.8 L925.3,184.7 L926.8,184.7 L928.3,184.7 L929.8,184.6 L931.3,184.6 L932.8,184.5 L934.3,184.4 L935.8,184.4 L937.3,184.3 L938.8,184.3 L940.3,184.2 L941.8,184.1 L943.3,184.1 L944.8,184.0 L946.3,183.9 L947.8,183.8 L949.3,183.8 L950.8,183.7 L952.3,183.6 L953.8,183.5 L955.3,183.4 L956.8,183.4 L958.3,183.3 L959.8,183.2 L961.3,183.1 L962.8,183.0 L964.3,182.9 L965.8,182.8 L967.3,182.7 L968.8,182.6 L970.3,182.5 L971.8,182.4 L973.3,182.3 L974.8,182.2 L976.3,182.2 L977.8,182.1 L979.3,182.0 L980.8,182.0 L982.3,181.9 L983.8,181.9 L985.3,181.8 L986.8,181.8 L988.3,181.8 L989.8,181.8 L991.3,181.8 L992.8,181.8 L994.3,181.8 L995.8,181.9 L997.3,181.9 L998.8,182.0 L1000.3,182.0 L1001.8,182.1 L1003.3,182.2 L1004.8,182.3 L1006.3,182.3 L1007.8,182.4 L1009.3,182.5 L1010.8,182.6 L1012.3,182.8 L1013.8,182.9 L1015.3,183.0 L1016.8,183.1 L1018.3,183.2 L1019.8,183.4 L1021.3,183.5 L1022.8,183.6 L1024.3,183.8 L1025.8,184.0 L1027.3,184.1 L1028.8,184.3 L1030.3,184.5 L1031.8,184.8 L1033.3,185.0 L1034.8,185.3 L1036.3,185.6 L1037.8,185.9 L1039.3,186.2 L1040.8,186.6 L1042.3,187.0 L1043.8,187.5 L1045.3,187.9 L1046.8,188.4 L1048.3,188.9 L1049.8,189.4 L1051.3,189.8 L1052.8,190.3 L1054.3,190.8 L1055.8,191.2 L1057.3,191.7 L1058.8,192.1 L1060.3,192.5 L1061.8,193.0 L1063.3,193.4 L1064.8,193.8 L1066.3,194.3 L1067.8,194.7 L1069.3,195.2 L1070.8,195.6 L1072.3,196.1 L1073.8,196.5 L1075.3,197.0 L1076.8,197.4 L1078.3,197.9 L1079.8,198.4 L1081.3,198.8 L1082.8,199.3 L1084.3,199.8 L1085.8,200.3 L1087.3,200.8 L1088.8,201.3 L1090.3,201.9 L1091.8,202.5 L1093.3,203.1 L1094.8,203.8 L1096.3,204.5 L1097.8,205.3 L1099.3,206.0 L1100.8,206.9 L1102.3,207.7 L1103.8,208.6 L1105.3,209.5 L1106.8,210.3 L1108.3,211.2 L1109.8,212.1 L1111.3,213.0 L1112.8,213.9 L1114.3,214.8 L1115.8,215.6 L1117.3,216.5 L1118.8,217.3 L1120.3,218.1 L1121.8,218.9 L1123.3,219.7 L1124.8,220.5 L1126.3,221.2 L1127.8,221.9 L1129.3,222.6 L1130.8,223.3 L1132.3,224.0 L1133.8,224.7 L1135.3,225.4 L1136.8,226.1 L1138.3,226.7 L1139.8,227.4 L1141.3,228.1 L1142.8,228.7 L1144.3,229.4 L1145.8,230.1 L1147.3,230.7 L1148.8,231.3 L1150.3,231.9 L1151.8,232.5 L1153.3,233.1 L1154.8,233.7 L1156.3,234.2 L1157.8,234.8 L1159.3,235.3 L1160.8,235.8 L1162.3,236.3 L1163.8,236.8 L1165.3,237.2 L1166.8,237.7 L1168.3,238.1 L1169.8,238.5 L1171.3,238.8 L1172.8,239.2 L1174.3,239.5 L1175.8,239.9 L1177.3,240.2 L1178.8,240.5 L1180.3,240.8 L1181.8,241.1 L1183.3,241.4 L1184.8,241.7 L1186.3,241.9 L1186.6,242.0" fill="none" stroke="#ff3300" stroke-width="2.6" stroke-dasharray="2.5 2.4"/>
<path d="M504.4,297.3 L505.9,297.3 L507.4,297.3 L508.9,297.3 L510.4,297.3 L511.9,297.3 L513.4,297.2 L514.9,297.2 L516.4,297.2 L517.9,297.1 L519.4,297.0 L520.9,297.0 L522.4,296.8 L523.9,296.7 L525.4,296.6 L526.9,296.4 L528.4,296.2 L529.9,296.0 L531.4,295.8 L532.9,295.6 L534.4,295.4 L535.9,295.1 L537.4,294.9 L538.9,294.6 L540.4,294.4 L541.9,294.1 L543.4,293.9 L544.9,293.6 L546.4,293.4 L547.9,293.1 L549.4,292.9 L550.9,292.7 L552.4,292.4 L553.9,292.2 L555.4,292.0 L556.9,291.8 L558.4,291.6 L559.9,291.5 L561.4,291.3 L562.9,291.1 L564.4,290.9 L565.9,290.8 L567.4,290.6 L568.9,290.4 L570.4,290.3 L571.9,290.1 L573.4,290.0 L574.9,289.8 L576.4,289.6 L577.9,289.5 L579.4,289.3 L580.9,289.1 L582.4,289.0 L583.9,288.8 L585.4,288.6 L586.9,288.4 L588.4,288.2 L589.9,288.0 L591.4,287.8 L592.9,287.6 L594.4,287.4 L595.9,287.1 L597.4,286.9 L598.9,286.6 L600.4,286.4 L601.9,286.1 L603.4,285.8 L604.9,285.5 L606.4,285.2 L607.9,285.0 L609.4,284.7 L610.9,284.4 L612.4,284.1 L613.9,283.8 L615.4,283.5 L616.9,283.2 L618.4,283.0 L619.9,282.7 L621.4,282.4 L622.9,282.2 L624.4,282.0 L625.9,281.7 L627.4,281.5 L628.9,281.3 L630.4,281.1 L631.9,280.9 L633.4,280.7 L634.9,280.5 L636.4,280.3 L637.9,280.1 L639.4,280.0 L640.9,279.8 L642.4,279.6 L643.9,279.5 L645.4,279.3 L646.9,279.1 L648.4,279.0 L649.9,278.8 L651.4,278.6 L652.9,278.5 L654.4,278.3 L655.9,278.2 L657.4,278.0 L658.9,277.9 L660.4,277.7 L661.9,277.6 L663.4,277.5 L664.9,277.3 L666.4,277.2 L667.9,277.1 L669.4,277.0 L670.9,276.9 L672.4,276.8 L673.9,276.6 L675.4,276.6 L676.9,276.5 L678.4,276.4 L679.9,276.3 L681.4,276.2 L682.9,276.2 L684.4,276.1 L685.9,276.0 L687.4,276.0 L688.9,276.0 L690.4,275.9 L691.9,275.9 L693.4,275.9 L694.9,275.8 L696.4,275.8 L697.9,275.8 L699.4,275.8 L700.9,275.8 L702.4,275.8 L703.9,275.9 L705.4,275.9 L706.9,275.9 L708.4,275.9 L709.9,276.0 L711.4,276.0 L712.9,276.0 L714.4,276.1 L715.9,276.1 L717.4,276.2 L718.9,276.2 L720.4,276.3 L721.9,276.4 L723.4,276.4 L724.9,276.5 L726.4,276.6 L727.9,276.6 L729.4,276.7 L730.9,276.8 L732.4,276.9 L733.9,276.9 L735.4,277.0 L736.9,277.1 L738.4,277.2 L739.9,277.3 L741.4,277.4 L742.9,277.5 L744.4,277.6 L745.9,277.7 L747.4,277.8 L748.9,277.8 L750.4,277.9 L751.9,278.0 L753.4,278.1 L754.9,278.2 L756.4,278.3 L757.9,278.4 L759.4,278.4 L760.9,278.5 L762.4,278.6 L763.9,278.6 L765.4,278.7 L766.9,278.7 L768.4,278.8 L769.9,278.8 L771.4,278.9 L772.9,278.9 L774.4,278.9 L775.9,278.9 L777.4,278.9 L778.9,278.9 L780.4,278.9 L781.9,278.9 L783.4,278.8 L784.9,278.8 L786.4,278.7 L787.9,278.7 L789.4,278.6 L790.9,278.5 L792.4,278.5 L793.9,278.4 L795.4,278.3 L796.9,278.2 L798.4,278.1 L799.9,278.0 L801.4,277.9 L802.9,277.8 L804.4,277.7 L805.9,277.5 L807.4,277.4 L808.9,277.3 L810.4,277.2 L811.9,277.1 L813.4,276.9 L814.9,276.8 L816.4,276.7 L817.9,276.6 L819.4,276.4 L820.9,276.3 L822.4,276.1 L823.9,276.0 L825.4,275.8 L826.9,275.7 L828.4,275.5 L829.9,275.3 L831.4,275.2 L832.9,275.0 L834.4,274.8 L835.9,274.6 L837.4,274.3 L838.9,274.1 L840.4,273.9 L841.9,273.6 L843.4,273.4 L844.9,273.1 L846.4,272.8 L847.9,272.5 L849.4,272.2 L850.9,271.9 L852.4,271.6 L853.9,271.3 L855.4,271.0 L856.9,270.7 L858.4,270.4 L859.9,270.0 L861.4,269.7 L862.9,269.4 L864.4,269.1 L865.9,268.8 L867.4,268.4 L868.9,268.1 L870.4,267.8 L871.9,267.5 L873.4,267.3 L874.9,267.0 L876.4,266.7 L877.9,266.5 L879.4,266.3 L880.9,266.0 L882.4,265.8 L883.9,265.6 L885.4,265.4 L886.9,265.3 L888.4,265.1 L889.9,264.9 L891.4,264.8 L892.9,264.6 L894.4,264.5 L895.9,264.4 L897.4,264.2 L898.9,264.1 L900.4,264.0 L901.9,263.9 L903.4,263.8 L904.9,263.7 L906.4,263.6 L907.9,263.5 L909.4,263.3 L910.9,263.2 L912.4,263.1 L913.9,263.0 L915.4,262.9 L916.9,262.8 L918.4,262.7 L919.9,262.5 L921.4,262.4 L922.9,262.3 L924.4,262.2 L925.9,262.1 L927.4,261.9 L928.9,261.8 L930.4,261.7 L931.9,261.6 L933.4,261.5 L934.9,261.5 L936.4,261.4 L937.9,261.4 L939.4,261.3 L940.9,261.3 L942.4,261.3 L943.9,261.3 L945.4,261.4 L946.9,261.4 L948.4,261.5 L949.9,261.6 L951.4,261.6 L952.9,261.7 L954.4,261.9 L955.9,262.0 L957.4,262.1 L958.9,262.2 L960.4,262.4 L961.9,262.5 L963.4,262.7 L964.9,262.8 L966.4,262.9 L967.9,263.1 L969.4,263.2 L970.9,263.4 L972.4,263.5 L973.9,263.6 L975.4,263.8 L976.9,263.9 L978.4,264.1 L979.9,264.2 L981.4,264.3 L982.9,264.5 L984.4,264.6 L985.9,264.7 L987.4,264.9 L988.9,265.0 L990.4,265.2 L991.9,265.4 L993.4,265.5 L994.9,265.7 L996.4,265.9 L997.9,266.1 L999.4,266.2 L1000.9,266.4 L1002.4,266.6 L1003.9,266.9 L1005.4,267.1 L1006.9,267.3 L1008.4,267.5 L1009.9,267.7 L1011.4,267.9 L1012.9,268.2 L1014.4,268.4 L1015.9,268.6 L1017.4,268.8 L1018.9,269.0 L1020.4,269.2 L1021.9,269.4 L1023.4,269.5 L1024.9,269.7 L1026.4,269.9 L1027.9,270.0 L1029.4,270.2 L1030.9,270.3 L1032.4,270.4 L1033.9,270.5 L1035.4,270.6 L1036.9,270.7 L1038.4,270.7 L1039.9,270.8 L1041.4,270.8 L1042.9,270.9 L1044.4,270.9 L1045.9,270.9 L1047.4,271.0 L1048.9,271.0 L1050.4,271.0 L1051.9,271.0 L1053.4,271.0 L1054.9,271.0 L1056.4,271.0 L1057.9,271.0 L1059.4,271.0 L1060.9,270.9 L1062.4,270.9 L1063.9,270.9 L1065.4,270.8 L1066.9,270.8 L1068.4,270.8 L1069.9,270.7 L1071.4,270.7 L1072.9,270.6 L1074.4,270.6 L1075.9,270.5 L1077.4,270.5 L1078.9,270.4 L1080.4,270.3 L1081.9,270.3 L1083.4,270.2 L1084.9,270.1 L1086.4,270.1 L1087.9,270.0 L1089.4,269.9 L1090.9,269.9 L1092.4,269.8 L1093.9,269.7 L1095.4,269.6 L1096.9,269.5 L1098.4,269.5 L1099.9,269.4 L1101.4,269.3 L1102.9,269.2 L1104.4,269.1 L1105.9,269.0 L1107.4,268.9 L1108.9,268.8 L1110.4,268.7 L1111.9,268.6 L1113.4,268.5 L1114.9,268.4 L1116.4,268.3 L1117.9,268.2 L1119.4,268.1 L1120.9,268.0 L1122.4,267.9 L1123.9,267.7 L1125.4,267.6 L1126.9,267.5 L1128.4,267.4 L1129.9,267.2 L1131.4,267.1 L1132.9,266.9 L1134.4,266.8 L1135.9,266.6 L1137.4,266.5 L1138.9,266.4 L1140.4,266.2 L1141.9,266.1 L1143.4,265.9 L1144.9,265.8 L1146.4,265.7 L1147.9,265.5 L1149.4,265.4 L1150.9,265.3 L1152.4,265.2 L1153.9,265.1 L1155.4,265.0 L1156.9,264.9 L1158.4,264.8 L1159.9,264.7 L1161.4,264.7 L1162.9,264.6 L1164.4,264.6 L1165.9,264.5 L1167.4,264.5 L1168.9,264.5 L1170.4,264.5 L1171.9,264.4 L1173.4,264.4 L1174.9,264.4 L1176.4,264.4 L1177.9,264.4 L1179.4,264.4 L1180.9,264.4 L1182.4,264.4 L1183.9,264.4 L1185.4,264.4 L1186.9,264.4 L1188.4,264.4 L1189.9,264.3 L1191.4,264.3 L1192.9,264.3 L1194.4,264.3 L1195.9,264.3 L1197.4,264.3 L1198.9,264.3 L1200.4,264.3 L1201.9,264.3 L1203.4,264.3 L1204.9,264.3 L1206.4,264.3 L1207.9,264.3 L1209.4,264.3 L1210.9,264.3 L1212.4,264.3 L1213.9,264.3 L1215.4,264.3 L1216.9,264.3 L1218.4,264.3 L1219.9,264.3 L1221.4,264.3 L1222.9,264.3 L1224.4,264.3 L1225.9,264.3 L1227.4,264.3 L1228.9,264.4 L1230.4,264.4 L1231.9,264.4 L1233.4,264.4 L1234.9,264.4 L1236.4,264.4 L1237.9,264.4 L1239.4,264.4 L1240.9,264.4 L1242.4,264.4 L1243.9,264.4 L1245.4,264.4 L1246.9,264.4 L1248.0,264.4" fill="none" stroke="#0864c8" stroke-width="2.6" stroke-dasharray="2.5 2.4"/>
<path d="M367.3,390.9 L368.8,390.6 L370.3,390.2 L371.8,389.9 L373.3,389.5 L374.8,389.2 L376.3,388.9 L377.8,388.6 L379.3,388.3 L380.8,388.0 L382.3,387.7 L383.8,387.4 L385.3,387.1 L386.8,386.8 L388.3,386.6 L389.8,386.3 L391.3,386.0 L392.8,385.6 L394.3,385.2 L395.8,384.8 L397.3,384.3 L398.8,383.8 L400.3,383.2 L401.8,382.6 L403.3,381.9 L404.8,381.1 L406.3,380.3 L407.8,379.4 L409.3,378.5 L410.8,377.5 L412.3,376.5 L413.8,375.4 L415.3,374.3 L416.8,373.2 L418.3,372.1 L419.8,370.9 L421.3,369.7 L422.8,368.6 L424.3,367.4 L425.8,366.2 L427.3,365.1 L428.8,363.9 L430.3,362.8 L431.8,361.7 L433.3,360.6 L434.8,359.6 L436.3,358.5 L437.8,357.5 L439.3,356.5 L440.8,355.5 L442.3,354.5 L443.8,353.5 L445.3,352.5 L446.8,351.5 L448.3,350.5 L449.8,349.5 L451.3,348.5 L452.8,347.5 L454.3,346.5 L455.8,345.5 L457.3,344.5 L458.8,343.5 L460.3,342.5 L461.8,341.6 L463.3,340.6 L464.8,339.6 L466.3,338.6 L467.8,337.6 L469.3,336.7 L470.8,335.7 L472.3,334.7 L473.8,333.8 L475.3,332.8 L476.8,331.9 L478.3,331.0 L479.8,330.0 L481.3,329.1 L482.8,328.2 L484.3,327.3 L485.8,326.3 L487.3,325.4 L488.8,324.4 L490.3,323.5 L491.8,322.5 L493.3,321.6 L494.8,320.6 L496.3,319.6 L497.8,318.6 L499.3,317.5 L500.8,316.5 L502.3,315.4 L503.8,314.3 L505.3,313.2 L506.8,312.1 L508.3,310.9 L509.8,309.7 L511.3,308.5 L512.8,307.4 L514.3,306.2 L515.8,305.0 L517.3,303.9 L518.8,302.7 L520.3,301.6 L521.8,300.6 L523.3,299.6 L524.8,298.6 L526.3,297.7 L527.8,296.8 L529.3,296.0 L530.8,295.3 L532.3,294.6 L533.8,293.9 L535.3,293.3 L536.8,292.7 L538.3,292.2 L539.8,291.7 L541.3,291.2 L542.8,290.7 L544.3,290.2 L545.8,289.7 L547.3,289.2 L548.8,288.8 L550.3,288.3 L551.8,287.8 L553.3,287.3 L554.8,286.9 L556.3,286.3 L557.8,285.8 L559.3,285.3 L560.8,284.8 L562.3,284.2 L563.8,283.7 L565.3,283.1 L566.8,282.5 L568.3,282.0 L569.8,281.4 L571.3,280.8 L572.8,280.3 L574.3,279.7 L575.8,279.2 L577.3,278.6 L578.8,278.0 L580.3,277.5 L581.8,276.9 L583.3,276.3 L584.8,275.8 L586.3,275.2 L587.8,274.6 L589.3,274.0 L590.8,273.4 L592.3,272.8 L593.8,272.2 L595.3,271.6 L596.8,271.0 L598.3,270.4 L599.8,269.7 L601.3,269.1 L602.8,268.4 L604.3,267.8 L605.8,267.1 L607.3,266.4 L608.8,265.7 L610.3,265.0 L611.8,264.3 L613.3,263.6 L614.8,262.9 L616.3,262.2 L617.8,261.5 L619.3,260.7 L620.8,260.0 L622.3,259.3 L623.8,258.5 L625.3,257.8 L626.8,257.0 L628.3,256.2 L629.8,255.5 L631.3,254.7 L632.8,253.9 L634.3,253.2 L635.8,252.4 L637.3,251.6 L638.8,250.9 L640.3,250.1 L641.8,249.3 L643.3,248.5 L644.8,247.8 L646.3,247.0 L647.8,246.2 L649.3,245.5 L650.8,244.7 L652.3,244.0 L653.8,243.3 L655.3,242.6 L656.8,241.9 L658.3,241.2 L659.8,240.5 L661.3,239.9 L662.8,239.3 L664.3,238.7 L665.8,238.1 L667.3,237.5 L668.8,236.9 L670.3,236.4 L671.8,235.8 L673.3,235.3 L674.8,234.8 L676.3,234.3 L677.8,233.8 L679.3,233.4 L680.8,232.9 L682.3,232.5 L683.8,232.0 L685.3,231.6 L686.8,231.2 L688.3,230.8 L689.8,230.4 L691.3,230.0 L692.8,229.6 L694.3,229.3 L695.8,228.9 L697.3,228.6 L698.8,228.2 L700.3,227.9 L701.8,227.5 L703.3,227.2 L704.8,226.9 L706.3,226.6 L707.8,226.3 L709.3,226.0 L710.8,225.7 L712.3,225.4 L713.8,225.1 L715.3,224.9 L716.8,224.6 L718.3,224.3 L719.8,224.1 L721.3,223.8 L722.8,223.6 L724.3,223.3 L725.8,223.1 L727.3,222.9 L728.8,222.6 L730.3,222.4 L731.8,222.2 L733.3,222.0 L734.8,221.7 L736.3,221.5 L737.8,221.3 L739.3,221.1 L740.8,220.9 L742.3,220.7 L743.8,220.5 L745.3,220.3 L746.8,220.1 L748.3,219.9 L749.8,219.7 L751.3,219.4 L752.8,219.2 L754.3,219.0 L755.8,218.8 L757.3,218.6 L758.8,218.3 L760.3,218.1 L761.8,217.8 L763.3,217.6 L764.8,217.3 L766.3,217.1 L767.8,216.8 L769.3,216.5 L770.8,216.2 L772.3,215.8 L773.8,215.5 L775.3,215.2 L776.8,214.8 L778.3,214.4 L779.8,214.0 L781.3,213.6 L782.8,213.2 L784.3,212.7 L785.8,212.3 L787.3,211.8 L788.8,211.3 L790.3,210.8 L791.8,210.2 L793.3,209.7 L794.8,209.1 L796.3,208.5 L797.8,207.9 L799.3,207.4 L800.8,206.8 L802.3,206.2 L803.8,205.6 L805.3,205.0 L806.8,204.4 L808.3,203.9 L809.8,203.3 L811.3,202.8 L812.8,202.3 L814.3,201.8 L815.8,201.3 L817.3,200.8 L818.8,200.3 L820.3,199.8 L821.8,199.3 L823.3,198.9 L824.8,198.4 L826.3,198.0 L827.8,197.5 L829.3,197.1 L830.8,196.6 L832.3,196.2 L833.8,195.7 L835.3,195.3 L836.8,194.9 L838.3,194.4 L839.8,194.0 L841.3,193.6 L842.8,193.1 L844.3,192.7 L845.8,192.3 L847.3,191.8 L848.8,191.4 L850.3,190.9 L851.8,190.5 L853.3,190.0 L854.8,189.5 L856.3,189.0 L857.8,188.5 L859.3,188.0 L860.8,187.5 L862.3,187.0 L863.8,186.4 L865.3,185.8 L866.8,185.2 L868.3,184.6 L869.8,184.0 L871.3,183.3 L872.8,182.6 L874.3,181.9 L875.8,181.2 L877.3,180.4 L878.8,179.6 L880.3,178.8 L881.8,178.0 L883.3,177.2 L884.8,176.3 L886.3,175.5 L887.8,174.6 L889.3,173.8 L890.8,173.0 L892.3,172.3 L893.8,171.6 L895.3,170.9 L896.8,170.3 L898.3,169.7 L899.8,169.2 L901.3,168.7 L902.8,168.3 L904.3,167.9 L905.8,167.5 L907.3,167.2 L908.8,166.9 L910.3,166.6 L911.8,166.3 L913.3,166.1 L914.8,165.8 L916.3,165.6 L917.8,165.3 L919.3,165.1 L920.8,164.8 L922.3,164.6 L923.8,164.3 L925.3,164.1 L926.8,163.8 L928.3,163.5 L929.8,163.2 L931.3,162.9 L932.8,162.6 L934.3,162.3 L935.8,162.0 L937.3,161.6 L938.8,161.2 L940.3,160.8 L941.8,160.4 L943.3,159.9 L944.8,159.5 L946.3,159.0 L947.8,158.5 L949.3,158.0 L950.8,157.5 L952.3,157.0 L953.8,156.5 L955.3,155.9 L956.8,155.4 L958.3,154.9 L959.8,154.3 L961.3,153.8 L962.8,153.3 L964.3,152.7 L965.8,152.2 L967.3,151.7 L968.8,151.2 L970.3,150.6 L971.8,150.1 L973.3,149.6 L974.8,149.1 L976.3,148.6 L977.8,148.2 L979.3,147.7 L980.8,147.2 L982.3,146.8 L983.8,146.3 L985.3,145.9 L986.8,145.5 L988.3,145.1 L989.8,144.7 L991.3,144.3 L992.8,144.0 L994.3,143.6 L995.8,143.3 L997.3,142.9 L998.8,142.6 L1000.3,142.3 L1001.8,142.0 L1003.3,141.6 L1004.8,141.3 L1006.3,141.0 L1007.8,140.8 L1009.3,140.5 L1010.8,140.2 L1012.3,139.9 L1013.8,139.6 L1015.3,139.3 L1016.8,139.1 L1018.3,138.8 L1019.8,138.5 L1021.3,138.3 L1022.8,138.0 L1024.3,137.7 L1025.8,137.5 L1027.3,137.2 L1028.8,137.0 L1030.3,136.8 L1031.8,136.6 L1033.3,136.4 L1034.8,136.3 L1036.3,136.1 L1037.8,136.0 L1039.3,135.9 L1040.8,135.9 L1042.3,135.8 L1043.8,135.8 L1045.3,135.8 L1046.8,135.9 L1048.3,136.0 L1049.8,136.1 L1051.3,136.2 L1052.8,136.4 L1054.3,136.6 L1055.8,136.8 L1057.3,137.0 L1058.8,137.2 L1060.3,137.4 L1061.8,137.7 L1063.3,138.0 L1064.8,138.2 L1066.3,138.5 L1067.8,138.8 L1069.3,139.1 L1070.8,139.3 L1072.3,139.6 L1073.8,139.9 L1075.3,140.2 L1076.8,140.5 L1078.3,140.8 L1079.8,141.1 L1081.3,141.4 L1082.8,141.7 L1084.3,142.0 L1085.8,142.4 L1087.3,142.7 L1088.8,143.1 L1090.3,143.5 L1091.8,143.9 L1093.3,144.3 L1094.8,144.8 L1096.3,145.2 L1097.8,145.7 L1099.3,146.2 L1100.8,146.7 L1102.3,147.3 L1103.8,147.8 L1105.3,148.4 L1106.8,149.0 L1108.3,149.7 L1109.8,150.3 L1111.3,151.0 L1112.8,151.7 L1114.3,152.5 L1115.8,153.2 L1117.3,154.0 L1118.8,154.7 L1120.3,155.5 L1121.8,156.3 L1123.3,157.0 L1124.8,157.8 L1126.3,158.6 L1127.8,159.4 L1129.3,160.1 L1130.8,160.9 L1132.3,161.6 L1133.8,162.4 L1135.3,163.1 L1136.8,163.8 L1138.3,164.5 L1139.8,165.2 L1141.3,165.9 L1142.8,166.5 L1144.3,167.1 L1145.8,167.7 L1147.3,168.3 L1148.8,168.9 L1150.3,169.5 L1151.8,170.0 L1153.3,170.5 L1154.8,171.0 L1156.3,171.5 L1157.8,171.9 L1159.3,172.4 L1160.8,172.8 L1162.3,173.2 L1163.8,173.6 L1165.3,174.0 L1166.8,174.3 L1168.3,174.7 L1169.8,175.0 L1171.3,175.3 L1172.8,175.6 L1174.3,175.9 L1175.8,176.2 L1177.3,176.4 L1178.8,176.7 L1180.3,177.0 L1181.8,177.2 L1183.3,177.5 L1184.8,177.7 L1186.3,178.0 L1186.6,178.0" fill="none" stroke="#ff3300" stroke-width="2.6"/>
<path d="M504.4,353.0 L505.9,352.8 L507.4,352.7 L508.9,352.5 L510.4,352.3 L511.9,352.2 L513.4,352.0 L514.9,351.8 L516.4,351.6 L517.9,351.5 L519.4,351.3 L520.9,351.1 L522.4,350.9 L523.9,350.7 L525.4,350.5 L526.9,350.3 L528.4,350.1 L529.9,349.9 L531.4,349.7 L532.9,349.5 L534.4,349.3 L535.9,349.1 L537.4,348.9 L538.9,348.7 L540.4,348.4 L541.9,348.2 L543.4,347.9 L544.9,347.7 L546.4,347.4 L547.9,347.1 L549.4,346.9 L550.9,346.6 L552.4,346.3 L553.9,346.0 L555.4,345.6 L556.9,345.3 L558.4,345.0 L559.9,344.6 L561.4,344.3 L562.9,343.9 L564.4,343.5 L565.9,343.1 L567.4,342.7 L568.9,342.3 L570.4,341.9 L571.9,341.5 L573.4,341.0 L574.9,340.6 L576.4,340.1 L577.9,339.7 L579.4,339.3 L580.9,338.8 L582.4,338.4 L583.9,337.9 L585.4,337.4 L586.9,337.0 L588.4,336.5 L589.9,336.0 L591.4,335.6 L592.9,335.1 L594.4,334.6 L595.9,334.2 L597.4,333.7 L598.9,333.2 L600.4,332.7 L601.9,332.3 L603.4,331.8 L604.9,331.3 L606.4,330.8 L607.9,330.3 L609.4,329.9 L610.9,329.4 L612.4,328.9 L613.9,328.4 L615.4,327.9 L616.9,327.4 L618.4,327.0 L619.9,326.5 L621.4,326.0 L622.9,325.5 L624.4,325.1 L625.9,324.6 L627.4,324.1 L628.9,323.7 L630.4,323.2 L631.9,322.7 L633.4,322.3 L634.9,321.8 L636.4,321.4 L637.9,320.9 L639.4,320.4 L640.9,320.0 L642.4,319.6 L643.9,319.1 L645.4,318.7 L646.9,318.3 L648.4,317.8 L649.9,317.4 L651.4,317.0 L652.9,316.6 L654.4,316.2 L655.9,315.7 L657.4,315.3 L658.9,314.9 L660.4,314.5 L661.9,314.1 L663.4,313.8 L664.9,313.4 L666.4,313.0 L667.9,312.6 L669.4,312.2 L670.9,311.9 L672.4,311.5 L673.9,311.2 L675.4,310.8 L676.9,310.5 L678.4,310.1 L679.9,309.8 L681.4,309.4 L682.9,309.1 L684.4,308.8 L685.9,308.5 L687.4,308.1 L688.9,307.8 L690.4,307.5 L691.9,307.2 L693.4,306.9 L694.9,306.6 L696.4,306.4 L697.9,306.1 L699.4,305.8 L700.9,305.5 L702.4,305.3 L703.9,305.0 L705.4,304.7 L706.9,304.5 L708.4,304.2 L709.9,304.0 L711.4,303.7 L712.9,303.5 L714.4,303.2 L715.9,303.0 L717.4,302.7 L718.9,302.5 L720.4,302.3 L721.9,302.0 L723.4,301.8 L724.9,301.5 L726.4,301.3 L727.9,301.1 L729.4,300.8 L730.9,300.6 L732.4,300.3 L733.9,300.1 L735.4,299.9 L736.9,299.6 L738.4,299.4 L739.9,299.1 L741.4,298.9 L742.9,298.6 L744.4,298.4 L745.9,298.1 L747.4,297.8 L748.9,297.6 L750.4,297.3 L751.9,297.0 L753.4,296.8 L754.9,296.5 L756.4,296.2 L757.9,296.0 L759.4,295.7 L760.9,295.4 L762.4,295.1 L763.9,294.8 L765.4,294.5 L766.9,294.3 L768.4,294.0 L769.9,293.7 L771.4,293.4 L772.9,293.1 L774.4,292.8 L775.9,292.5 L777.4,292.2 L778.9,291.9 L780.4,291.6 L781.9,291.3 L783.4,291.0 L784.9,290.7 L786.4,290.4 L787.9,290.1 L789.4,289.8 L790.9,289.5 L792.4,289.1 L793.9,288.8 L795.4,288.5 L796.9,288.1 L798.4,287.8 L799.9,287.4 L801.4,287.0 L802.9,286.7 L804.4,286.3 L805.9,285.9 L807.4,285.5 L808.9,285.1 L810.4,284.6 L811.9,284.2 L813.4,283.7 L814.9,283.3 L816.4,282.8 L817.9,282.3 L819.4,281.8 L820.9,281.3 L822.4,280.8 L823.9,280.2 L825.4,279.7 L826.9,279.1 L828.4,278.6 L829.9,278.0 L831.4,277.4 L832.9,276.8 L834.4,276.2 L835.9,275.7 L837.4,275.1 L838.9,274.5 L840.4,273.9 L841.9,273.3 L843.4,272.7 L844.9,272.1 L846.4,271.5 L847.9,270.9 L849.4,270.3 L850.9,269.7 L852.4,269.1 L853.9,268.5 L855.4,267.9 L856.9,267.3 L858.4,266.7 L859.9,266.1 L861.4,265.5 L862.9,264.9 L864.4,264.3 L865.9,263.7 L867.4,263.1 L868.9,262.5 L870.4,261.9 L871.9,261.3 L873.4,260.7 L874.9,260.1 L876.4,259.5 L877.9,258.9 L879.4,258.2 L880.9,257.6 L882.4,257.0 L883.9,256.4 L885.4,255.8 L886.9,255.3 L888.4,254.7 L889.9,254.1 L891.4,253.5 L892.9,253.0 L894.4,252.4 L895.9,251.9 L897.4,251.4 L898.9,250.9 L900.4,250.4 L901.9,250.0 L903.4,249.5 L904.9,249.1 L906.4,248.7 L907.9,248.4 L909.4,248.0 L910.9,247.7 L912.4,247.4 L913.9,247.1 L915.4,246.8 L916.9,246.5 L918.4,246.2 L919.9,246.0 L921.4,245.7 L922.9,245.5 L924.4,245.2 L925.9,245.0 L927.4,244.7 L928.9,244.5 L930.4,244.2 L931.9,244.0 L933.4,243.7 L934.9,243.4 L936.4,243.1 L937.9,242.8 L939.4,242.5 L940.9,242.2 L942.4,241.9 L943.9,241.6 L945.4,241.4 L946.9,241.1 L948.4,240.8 L949.9,240.5 L951.4,240.2 L952.9,239.9 L954.4,239.6 L955.9,239.4 L957.4,239.1 L958.9,238.9 L960.4,238.6 L961.9,238.4 L963.4,238.2 L964.9,238.0 L966.4,237.7 L967.9,237.5 L969.4,237.4 L970.9,237.2 L972.4,237.0 L973.9,236.8 L975.4,236.6 L976.9,236.5 L978.4,236.3 L979.9,236.2 L981.4,236.0 L982.9,235.8 L984.4,235.7 L985.9,235.5 L987.4,235.4 L988.9,235.3 L990.4,235.1 L991.9,235.0 L993.4,234.8 L994.9,234.7 L996.4,234.6 L997.9,234.4 L999.4,234.3 L1000.9,234.2 L1002.4,234.0 L1003.9,233.9 L1005.4,233.8 L1006.9,233.7 L1008.4,233.6 L1009.9,233.5 L1011.4,233.4 L1012.9,233.3 L1014.4,233.2 L1015.9,233.2 L1017.4,233.1 L1018.9,233.0 L1020.4,233.0 L1021.9,232.9 L1023.4,232.9 L1024.9,232.9 L1026.4,232.8 L1027.9,232.8 L1029.4,232.7 L1030.9,232.6 L1032.4,232.6 L1033.9,232.5 L1035.4,232.3 L1036.9,232.2 L1038.4,232.0 L1039.9,231.8 L1041.4,231.5 L1042.9,231.3 L1044.4,231.0 L1045.9,230.6 L1047.4,230.3 L1048.9,229.9 L1050.4,229.6 L1051.9,229.2 L1053.4,228.8 L1054.9,228.4 L1056.4,228.0 L1057.9,227.6 L1059.4,227.2 L1060.9,226.8 L1062.4,226.4 L1063.9,226.0 L1065.4,225.6 L1066.9,225.2 L1068.4,224.8 L1069.9,224.4 L1071.4,224.0 L1072.9,223.6 L1074.4,223.2 L1075.9,222.8 L1077.4,222.4 L1078.9,222.0 L1080.4,221.6 L1081.9,221.1 L1083.4,220.7 L1084.9,220.3 L1086.4,219.9 L1087.9,219.5 L1089.4,219.1 L1090.9,218.7 L1092.4,218.2 L1093.9,217.8 L1095.4,217.4 L1096.9,217.0 L1098.4,216.6 L1099.9,216.2 L1101.4,215.7 L1102.9,215.3 L1104.4,214.9 L1105.9,214.5 L1107.4,214.0 L1108.9,213.6 L1110.4,213.2 L1111.9,212.8 L1113.4,212.4 L1114.9,211.9 L1116.4,211.5 L1117.9,211.1 L1119.4,210.8 L1120.9,210.4 L1122.4,210.0 L1123.9,209.7 L1125.4,209.4 L1126.9,209.0 L1128.4,208.7 L1129.9,208.4 L1131.4,208.1 L1132.9,207.7 L1134.4,207.4 L1135.9,207.1 L1137.4,206.7 L1138.9,206.4 L1140.4,206.0 L1141.9,205.6 L1143.4,205.2 L1144.9,204.8 L1146.4,204.3 L1147.9,203.9 L1149.4,203.5 L1150.9,203.0 L1152.4,202.6 L1153.9,202.2 L1155.4,201.8 L1156.9,201.4 L1158.4,201.0 L1159.9,200.6 L1161.4,200.3 L1162.9,200.0 L1164.4,199.6 L1165.9,199.4 L1167.4,199.1 L1168.9,198.8 L1170.4,198.5 L1171.9,198.3 L1173.4,198.1 L1174.9,197.8 L1176.4,197.6 L1177.9,197.4 L1179.4,197.2 L1180.9,197.0 L1182.4,196.8 L1183.9,196.6 L1185.4,196.4 L1186.9,196.2 L1188.4,196.0 L1189.9,195.8 L1191.4,195.6 L1192.9,195.4 L1194.4,195.2 L1195.9,195.0 L1197.4,194.8 L1198.9,194.6 L1200.4,194.5 L1201.9,194.3 L1203.4,194.1 L1204.9,194.0 L1206.4,193.9 L1207.9,193.7 L1209.4,193.6 L1210.9,193.5 L1212.4,193.4 L1213.9,193.4 L1215.4,193.3 L1216.9,193.3 L1218.4,193.2 L1219.9,193.2 L1221.4,193.2 L1222.9,193.2 L1224.4,193.2 L1225.9,193.2 L1227.4,193.2 L1228.9,193.2 L1230.4,193.2 L1231.9,193.2 L1233.4,193.3 L1234.9,193.3 L1236.4,193.4 L1237.9,193.4 L1239.4,193.5 L1240.9,193.5 L1242.4,193.6 L1243.9,193.6 L1245.4,193.7 L1246.9,193.8 L1248.0,193.8" fill="none" stroke="#0864c8" stroke-width="2.6"/>
<rect x="1045.9" y="132.8" width="7" height="7" fill="none" stroke="#ff3300" stroke-width="1" opacity="0.8"/>
<rect x="984.1" y="178.3" width="7" height="7" fill="none" stroke="#ff3300" stroke-width="1" opacity="0.8"/>
<rect x="937.7" y="258.0" width="7" height="7" fill="none" stroke="#0864c8" stroke-width="1" opacity="0.8"/>
<rect x="1244.0" y="190.3" width="7" height="7" fill="none" stroke="#0864c8" stroke-width="1" opacity="0.8"/>
<rect x="802.5" y="500.5" width="447" height="64" fill="#fff" stroke="#000" stroke-width="1.2"/>
<line x1="810.5" y1="515.3" x2="874.5" y2="515.3" stroke="#ff3300" stroke-width="2.6"/>
<line x1="810.5" y1="547.3" x2="874.5" y2="547.3" stroke="#0864c8" stroke-width="2.6"/>
<text x="892.5" y="511.7" font-family="Liberation Sans" font-weight="bold" font-size="12.6" xml:space="preserve" textLength="331" lengthAdjust="spacing">2025-08-29_16.39.55_18psi  Gear:4  Wt:2530  Tire:22.72</text>
<text x="892.5" y="527.6" font-family="Liberation Sans" font-weight="bold" font-size="12.6" xml:space="preserve" textLength="331" lengthAdjust="spacing">(301whp@5988rpm)  (269lbft@5762rpm)  Smoothing:2</text>
<text x="892.5" y="543.5" font-family="Liberation Sans" font-weight="bold" font-size="12.6" xml:space="preserve" textLength="331" lengthAdjust="spacing">2025-08-29_16.36.08_12psi  Gear:4  Wt:2530  Tire:22.72</text>
<text x="892.5" y="559.4" font-family="Liberation Sans" font-weight="bold" font-size="12.6" xml:space="preserve" textLength="331" lengthAdjust="spacing">(261whp@6715rpm)  (213lbft@5592rpm)  Smoothing:2</text>
<line x1="367.5" y1="564.5" x2="1249.5" y2="564.5" stroke="#000" stroke-width="1.5"/>
<line x1="505.70" y1="574.5" x2="505.70" y2="788.5" stroke="#cccccc" stroke-width="1.8"/>
<line x1="642.80" y1="574.5" x2="642.80" y2="788.5" stroke="#cccccc" stroke-width="1.8"/>
<line x1="779.90" y1="574.5" x2="779.90" y2="788.5" stroke="#cccccc" stroke-width="1.8"/>
<line x1="917.00" y1="574.5" x2="917.00" y2="788.5" stroke="#cccccc" stroke-width="1.8"/>
<line x1="1054.10" y1="574.5" x2="1054.10" y2="788.5" stroke="#cccccc" stroke-width="1.8"/>
<line x1="1191.20" y1="574.5" x2="1191.20" y2="788.5" stroke="#cccccc" stroke-width="1.8"/>
<line x1="372" y1="783.5" x2="1246.5" y2="783.5" stroke="#d4d4d4" stroke-width="1" stroke-dasharray="2 4"/>
<line x1="372" y1="765.5" x2="1246.5" y2="765.5" stroke="#d4d4d4" stroke-width="1" stroke-dasharray="2 4"/>
<line x1="372" y1="746.5" x2="1246.5" y2="746.5" stroke="#d4d4d4" stroke-width="1" stroke-dasharray="2 4"/>
<line x1="372" y1="727.5" x2="1246.5" y2="727.5" stroke="#d4d4d4" stroke-width="1" stroke-dasharray="2 4"/>
<line x1="372" y1="709.5" x2="1246.5" y2="709.5" stroke="#d4d4d4" stroke-width="1" stroke-dasharray="2 4"/>
<line x1="372" y1="690.5" x2="1246.5" y2="690.5" stroke="#d4d4d4" stroke-width="1" stroke-dasharray="2 4"/>
<line x1="372" y1="672.5" x2="1246.5" y2="672.5" stroke="#d4d4d4" stroke-width="1" stroke-dasharray="2 4"/>
<line x1="372" y1="653.5" x2="1246.5" y2="653.5" stroke="#d4d4d4" stroke-width="1" stroke-dasharray="2 4"/>
<line x1="372" y1="635.5" x2="1246.5" y2="635.5" stroke="#d4d4d4" stroke-width="1" stroke-dasharray="2 4"/>
<line x1="372" y1="616.5" x2="1246.5" y2="616.5" stroke="#d4d4d4" stroke-width="1" stroke-dasharray="2 4"/>
<line x1="372" y1="597.5" x2="1246.5" y2="597.5" stroke="#d4d4d4" stroke-width="1" stroke-dasharray="2 4"/>
<line x1="372" y1="579.5" x2="1246.5" y2="579.5" stroke="#d4d4d4" stroke-width="1" stroke-dasharray="2 4"/>
<line x1="367.5" y1="731.5" x2="1249.5" y2="731.5" stroke="#a8a8a8" stroke-width="1"/>
<line x1="367.5" y1="698.5" x2="1249.5" y2="698.5" stroke="#a8a8a8" stroke-width="1"/>
<line x1="367.5" y1="664.5" x2="1249.5" y2="664.5" stroke="#a8a8a8" stroke-width="1"/>
<line x1="367.5" y1="631.5" x2="1249.5" y2="631.5" stroke="#a8a8a8" stroke-width="1"/>
<line x1="367.5" y1="597.5" x2="1249.5" y2="597.5" stroke="#a8a8a8" stroke-width="1"/>
<line x1="367.5" y1="765.5" x2="1249.5" y2="765.5" stroke="#000" stroke-width="1.2"/>
<line x1="369.0" y1="574.5" x2="369.0" y2="788.5" stroke="#dcdcdc" stroke-width="2"/>
<line x1="361" y1="765.5" x2="372" y2="765.5" stroke="#000" stroke-width="1.3"/>
<text x="345.3" y="769.1" text-anchor="middle" font-family="Liberation Sans" font-weight="bold" font-size="14">9</text>
<line x1="361" y1="731.9" x2="372" y2="731.9" stroke="#000" stroke-width="1.3"/>
<text x="345.3" y="735.5" text-anchor="middle" font-family="Liberation Sans" font-weight="bold" font-size="14">10</text>
<line x1="361" y1="698.3" x2="372" y2="698.3" stroke="#000" stroke-width="1.3"/>
<text x="345.3" y="701.9" text-anchor="middle" font-family="Liberation Sans" font-weight="bold" font-size="14">11</text>
<line x1="361" y1="664.7" x2="372" y2="664.7" stroke="#000" stroke-width="1.3"/>
<text x="345.3" y="668.3" text-anchor="middle" font-family="Liberation Sans" font-weight="bold" font-size="14">12</text>
<line x1="361" y1="631.1" x2="372" y2="631.1" stroke="#000" stroke-width="1.3"/>
<text x="345.3" y="634.7" text-anchor="middle" font-family="Liberation Sans" font-weight="bold" font-size="14">13</text>
<line x1="361" y1="597.5" x2="372" y2="597.5" stroke="#000" stroke-width="1.3"/>
<text x="345.3" y="601.1" text-anchor="middle" font-family="Liberation Sans" font-weight="bold" font-size="14">14</text>
<line x1="367" y1="783.6" x2="372" y2="783.6" stroke="#000" stroke-width="1.3"/>
<line x1="1243.5" y1="783.6" x2="1254.5" y2="783.6" stroke="#000" stroke-width="1.3"/>
<text x="1270.2" y="787.2" text-anchor="middle" font-family="Liberation Sans" font-weight="bold" font-size="14">-2</text>
<line x1="367" y1="765.0" x2="372" y2="765.0" stroke="#000" stroke-width="1.3"/>
<line x1="1246.5" y1="765.0" x2="1254.5" y2="765.0" stroke="#000" stroke-width="1.3"/>
<line x1="367" y1="746.4" x2="372" y2="746.4" stroke="#000" stroke-width="1.3"/>
<line x1="1243.5" y1="746.4" x2="1254.5" y2="746.4" stroke="#000" stroke-width="1.3"/>
<text x="1270.2" y="750.0" text-anchor="middle" font-family="Liberation Sans" font-weight="bold" font-size="14">2</text>
<line x1="367" y1="727.9" x2="372" y2="727.9" stroke="#000" stroke-width="1.3"/>
<line x1="1246.5" y1="727.9" x2="1254.5" y2="727.9" stroke="#000" stroke-width="1.3"/>
<line x1="367" y1="709.3" x2="372" y2="709.3" stroke="#000" stroke-width="1.3"/>
<line x1="1243.5" y1="709.3" x2="1254.5" y2="709.3" stroke="#000" stroke-width="1.3"/>
<text x="1270.2" y="712.9" text-anchor="middle" font-family="Liberation Sans" font-weight="bold" font-size="14">6</text>
<line x1="367" y1="690.8" x2="372" y2="690.8" stroke="#000" stroke-width="1.3"/>
<line x1="1246.5" y1="690.8" x2="1254.5" y2="690.8" stroke="#000" stroke-width="1.3"/>
<line x1="367" y1="672.2" x2="372" y2="672.2" stroke="#000" stroke-width="1.3"/>
<line x1="1243.5" y1="672.2" x2="1254.5" y2="672.2" stroke="#000" stroke-width="1.3"/>
<text x="1270.2" y="675.8" text-anchor="middle" font-family="Liberation Sans" font-weight="bold" font-size="14">10</text>
<line x1="367" y1="653.7" x2="372" y2="653.7" stroke="#000" stroke-width="1.3"/>
<line x1="1246.5" y1="653.7" x2="1254.5" y2="653.7" stroke="#000" stroke-width="1.3"/>
<line x1="367" y1="635.1" x2="372" y2="635.1" stroke="#000" stroke-width="1.3"/>
<line x1="1243.5" y1="635.1" x2="1254.5" y2="635.1" stroke="#000" stroke-width="1.3"/>
<text x="1270.2" y="638.7" text-anchor="middle" font-family="Liberation Sans" font-weight="bold" font-size="14">14</text>
<line x1="367" y1="616.6" x2="372" y2="616.6" stroke="#000" stroke-width="1.3"/>
<line x1="1246.5" y1="616.6" x2="1254.5" y2="616.6" stroke="#000" stroke-width="1.3"/>
<line x1="367" y1="598.0" x2="372" y2="598.0" stroke="#000" stroke-width="1.3"/>
<line x1="1243.5" y1="598.0" x2="1254.5" y2="598.0" stroke="#000" stroke-width="1.3"/>
<text x="1270.2" y="601.6" text-anchor="middle" font-family="Liberation Sans" font-weight="bold" font-size="14">18</text>
<line x1="367" y1="579.4" x2="372" y2="579.4" stroke="#000" stroke-width="1.3"/>
<line x1="1246.5" y1="579.4" x2="1254.5" y2="579.4" stroke="#000" stroke-width="1.3"/>
<line x1="367.3" y1="574.5" x2="367.3" y2="577.5" stroke="#000" stroke-width="1.3"/>
<line x1="367.3" y1="788.5" x2="367.3" y2="793.0" stroke="#000" stroke-width="1.3"/>
<line x1="394.7" y1="574.5" x2="394.7" y2="577.5" stroke="#000" stroke-width="1.3"/>
<line x1="394.7" y1="788.5" x2="394.7" y2="792.0" stroke="#000" stroke-width="1.3"/>
<line x1="422.1" y1="574.5" x2="422.1" y2="577.5" stroke="#000" stroke-width="1.3"/>
<line x1="422.1" y1="788.5" x2="422.1" y2="792.0" stroke="#000" stroke-width="1.3"/>
<line x1="449.6" y1="574.5" x2="449.6" y2="577.5" stroke="#000" stroke-width="1.3"/>
<line x1="449.6" y1="788.5" x2="449.6" y2="792.0" stroke="#000" stroke-width="1.3"/>
<line x1="477.0" y1="574.5" x2="477.0" y2="577.5" stroke="#000" stroke-width="1.3"/>
<line x1="477.0" y1="788.5" x2="477.0" y2="792.0" stroke="#000" stroke-width="1.3"/>
<line x1="504.4" y1="574.5" x2="504.4" y2="577.5" stroke="#000" stroke-width="1.3"/>
<line x1="504.4" y1="788.5" x2="504.4" y2="793.0" stroke="#000" stroke-width="1.3"/>
<line x1="531.8" y1="574.5" x2="531.8" y2="577.5" stroke="#000" stroke-width="1.3"/>
<line x1="531.8" y1="788.5" x2="531.8" y2="792.0" stroke="#000" stroke-width="1.3"/>
<line x1="559.2" y1="574.5" x2="559.2" y2="577.5" stroke="#000" stroke-width="1.3"/>
<line x1="559.2" y1="788.5" x2="559.2" y2="792.0" stroke="#000" stroke-width="1.3"/>
<line x1="586.7" y1="574.5" x2="586.7" y2="577.5" stroke="#000" stroke-width="1.3"/>
<line x1="586.7" y1="788.5" x2="586.7" y2="792.0" stroke="#000" stroke-width="1.3"/>
<line x1="614.1" y1="574.5" x2="614.1" y2="577.5" stroke="#000" stroke-width="1.3"/>
<line x1="614.1" y1="788.5" x2="614.1" y2="792.0" stroke="#000" stroke-width="1.3"/>
<line x1="641.5" y1="574.5" x2="641.5" y2="577.5" stroke="#000" stroke-width="1.3"/>
<line x1="641.5" y1="788.5" x2="641.5" y2="793.0" stroke="#000" stroke-width="1.3"/>
<line x1="668.9" y1="574.5" x2="668.9" y2="577.5" stroke="#000" stroke-width="1.3"/>
<line x1="668.9" y1="788.5" x2="668.9" y2="792.0" stroke="#000" stroke-width="1.3"/>
<line x1="696.3" y1="574.5" x2="696.3" y2="577.5" stroke="#000" stroke-width="1.3"/>
<line x1="696.3" y1="788.5" x2="696.3" y2="792.0" stroke="#000" stroke-width="1.3"/>
<line x1="723.8" y1="574.5" x2="723.8" y2="577.5" stroke="#000" stroke-width="1.3"/>
<line x1="723.8" y1="788.5" x2="723.8" y2="792.0" stroke="#000" stroke-width="1.3"/>
<line x1="751.2" y1="574.5" x2="751.2" y2="577.5" stroke="#000" stroke-width="1.3"/>
<line x1="751.2" y1="788.5" x2="751.2" y2="792.0" stroke="#000" stroke-width="1.3"/>
<line x1="778.6" y1="574.5" x2="778.6" y2="577.5" stroke="#000" stroke-width="1.3"/>
<line x1="778.6" y1="788.5" x2="778.6" y2="793.0" stroke="#000" stroke-width="1.3"/>
<line x1="806.0" y1="574.5" x2="806.0" y2="577.5" stroke="#000" stroke-width="1.3"/>
<line x1="806.0" y1="788.5" x2="806.0" y2="792.0" stroke="#000" stroke-width="1.3"/>
<line x1="833.4" y1="574.5" x2="833.4" y2="577.5" stroke="#000" stroke-width="1.3"/>
<line x1="833.4" y1="788.5" x2="833.4" y2="792.0" stroke="#000" stroke-width="1.3"/>
<line x1="860.9" y1="574.5" x2="860.9" y2="577.5" stroke="#000" stroke-width="1.3"/>
<line x1="860.9" y1="788.5" x2="860.9" y2="792.0" stroke="#000" stroke-width="1.3"/>
<line x1="888.3" y1="574.5" x2="888.3" y2="577.5" stroke="#000" stroke-width="1.3"/>
<line x1="888.3" y1="788.5" x2="888.3" y2="792.0" stroke="#000" stroke-width="1.3"/>
<line x1="915.7" y1="574.5" x2="915.7" y2="577.5" stroke="#000" stroke-width="1.3"/>
<line x1="915.7" y1="788.5" x2="915.7" y2="793.0" stroke="#000" stroke-width="1.3"/>
<line x1="943.1" y1="574.5" x2="943.1" y2="577.5" stroke="#000" stroke-width="1.3"/>
<line x1="943.1" y1="788.5" x2="943.1" y2="792.0" stroke="#000" stroke-width="1.3"/>
<line x1="970.5" y1="574.5" x2="970.5" y2="577.5" stroke="#000" stroke-width="1.3"/>
<line x1="970.5" y1="788.5" x2="970.5" y2="792.0" stroke="#000" stroke-width="1.3"/>
<line x1="998.0" y1="574.5" x2="998.0" y2="577.5" stroke="#000" stroke-width="1.3"/>
<line x1="998.0" y1="788.5" x2="998.0" y2="792.0" stroke="#000" stroke-width="1.3"/>
<line x1="1025.4" y1="574.5" x2="1025.4" y2="577.5" stroke="#000" stroke-width="1.3"/>
<line x1="1025.4" y1="788.5" x2="1025.4" y2="792.0" stroke="#000" stroke-width="1.3"/>
<line x1="1052.8" y1="574.5" x2="1052.8" y2="577.5" stroke="#000" stroke-width="1.3"/>
<line x1="1052.8" y1="788.5" x2="1052.8" y2="793.0" stroke="#000" stroke-width="1.3"/>
<line x1="1080.2" y1="574.5" x2="1080.2" y2="577.5" stroke="#000" stroke-width="1.3"/>
<line x1="1080.2" y1="788.5" x2="1080.2" y2="792.0" stroke="#000" stroke-width="1.3"/>
<line x1="1107.6" y1="574.5" x2="1107.6" y2="577.5" stroke="#000" stroke-width="1.3"/>
<line x1="1107.6" y1="788.5" x2="1107.6" y2="792.0" stroke="#000" stroke-width="1.3"/>
<line x1="1135.1" y1="574.5" x2="1135.1" y2="577.5" stroke="#000" stroke-width="1.3"/>
<line x1="1135.1" y1="788.5" x2="1135.1" y2="792.0" stroke="#000" stroke-width="1.3"/>
<line x1="1162.5" y1="574.5" x2="1162.5" y2="577.5" stroke="#000" stroke-width="1.3"/>
<line x1="1162.5" y1="788.5" x2="1162.5" y2="792.0" stroke="#000" stroke-width="1.3"/>
<line x1="1189.9" y1="574.5" x2="1189.9" y2="577.5" stroke="#000" stroke-width="1.3"/>
<line x1="1189.9" y1="788.5" x2="1189.9" y2="793.0" stroke="#000" stroke-width="1.3"/>
<line x1="1217.3" y1="574.5" x2="1217.3" y2="577.5" stroke="#000" stroke-width="1.3"/>
<line x1="1217.3" y1="788.5" x2="1217.3" y2="792.0" stroke="#000" stroke-width="1.3"/>
<line x1="1244.7" y1="574.5" x2="1244.7" y2="577.5" stroke="#000" stroke-width="1.3"/>
<line x1="1244.7" y1="788.5" x2="1244.7" y2="792.0" stroke="#000" stroke-width="1.3"/>
<rect x="367.5" y="574.5" width="882.0" height="214.0" fill="none" stroke="#000" stroke-width="1.5"/>
<text x="367.3" y="812" text-anchor="middle" font-family="Liberation Sans" font-weight="bold" font-size="14">3500</text>
<text x="504.4" y="812" text-anchor="middle" font-family="Liberation Sans" font-weight="bold" font-size="14">4000</text>
<text x="641.5" y="812" text-anchor="middle" font-family="Liberation Sans" font-weight="bold" font-size="14">4500</text>
<text x="778.6" y="812" text-anchor="middle" font-family="Liberation Sans" font-weight="bold" font-size="14">5000</text>
<text x="915.7" y="812" text-anchor="middle" font-family="Liberation Sans" font-weight="bold" font-size="14">5500</text>
<text x="1052.8" y="812" text-anchor="middle" font-family="Liberation Sans" font-weight="bold" font-size="14">6000</text>
<text x="1189.9" y="812" text-anchor="middle" font-family="Liberation Sans" font-weight="bold" font-size="14">6500</text>
<text x="808" y="835" text-anchor="middle" font-family="Liberation Sans" font-weight="bold" font-size="13">Engine Speed (RPM)</text>
<text transform="translate(322.4,681) rotate(-90)" x="-30.15" font-family="Liberation Sans" font-weight="bold" font-size="15.5" textLength="60.3" lengthAdjust="spacingAndGlyphs">Air / Fuel</text>
<text transform="translate(1297.8,680.6) rotate(-90)" x="-34.2" font-family="Liberation Sans" font-weight="bold" font-size="13.3" textLength="68.4" lengthAdjust="spacingAndGlyphs">Boost (PSI)</text>
<path d="M367.3,697.6 L368.8,696.5 L370.3,695.3 L371.8,694.2 L373.3,693.1 L374.8,692.0 L376.3,690.9 L377.8,689.8 L379.3,688.8 L380.8,687.7 L382.3,686.7 L383.8,685.6 L385.3,684.6 L386.8,683.6 L388.3,682.6 L389.8,681.6 L391.3,680.6 L392.8,679.6 L394.3,678.5 L395.8,677.5 L397.3,676.5 L398.8,675.4 L400.3,674.4 L401.8,673.3 L403.3,672.3 L404.8,671.2 L406.3,670.1 L407.8,669.0 L409.3,667.9 L410.8,666.8 L412.3,665.7 L413.8,664.6 L415.3,663.6 L416.8,662.5 L418.3,661.4 L419.8,660.3 L421.3,659.2 L422.8,658.1 L424.3,657.1 L425.8,656.0 L427.3,655.0 L428.8,654.0 L430.3,652.9 L431.8,651.9 L433.3,650.9 L434.8,650.0 L436.3,649.0 L437.8,648.1 L439.3,647.1 L440.8,646.2 L442.3,645.3 L443.8,644.4 L445.3,643.5 L446.8,642.7 L448.3,641.8 L449.8,640.9 L451.3,640.1 L452.8,639.2 L454.3,638.4 L455.8,637.6 L457.3,636.7 L458.8,635.9 L460.3,635.1 L461.8,634.3 L463.3,633.6 L464.8,632.8 L466.3,632.1 L467.8,631.3 L469.3,630.6 L470.8,629.9 L472.3,629.3 L473.8,628.6 L475.3,628.0 L476.8,627.4 L478.3,626.8 L479.8,626.2 L481.3,625.7 L482.8,625.1 L484.3,624.6 L485.8,624.1 L487.3,623.7 L488.8,623.2 L490.3,622.8 L491.8,622.4 L493.3,622.1 L494.8,621.7 L496.3,621.4 L497.8,621.1 L499.3,620.8 L500.8,620.5 L502.3,620.3 L503.8,620.1 L505.3,619.8 L506.8,619.6 L508.3,619.4 L509.8,619.3 L511.3,619.1 L512.8,619.0 L514.3,618.8 L515.8,618.7 L517.3,618.6 L518.8,618.5 L520.3,618.4 L521.8,618.3 L523.3,618.2 L524.8,618.1 L526.3,618.1 L527.8,618.0 L529.3,617.9 L530.8,617.9 L532.3,617.8 L533.8,617.8 L535.3,617.8 L536.8,617.7 L538.3,617.7 L539.8,617.7 L541.3,617.7 L542.8,617.6 L544.3,617.6 L545.8,617.6 L547.3,617.6 L548.8,617.6 L550.3,617.6 L551.8,617.5 L553.3,617.5 L554.8,617.5 L556.3,617.5 L557.8,617.4 L559.3,617.4 L560.8,617.4 L562.3,617.3 L563.8,617.3 L565.3,617.3 L566.8,617.2 L568.3,617.2 L569.8,617.1 L571.3,617.0 L572.8,617.0 L574.3,616.9 L575.8,616.9 L577.3,616.8 L578.8,616.7 L580.3,616.6 L581.8,616.6 L583.3,616.5 L584.8,616.4 L586.3,616.3 L587.8,616.2 L589.3,616.1 L590.8,616.1 L592.3,616.0 L593.8,615.9 L595.3,615.8 L596.8,615.7 L598.3,615.6 L599.8,615.5 L601.3,615.4 L602.8,615.3 L604.3,615.2 L605.8,615.1 L607.3,614.9 L608.8,614.8 L610.3,614.7 L611.8,614.6 L613.3,614.5 L614.8,614.4 L616.3,614.2 L617.8,614.1 L619.3,614.0 L620.8,613.9 L622.3,613.7 L623.8,613.6 L625.3,613.5 L626.8,613.3 L628.3,613.2 L629.8,613.1 L631.3,612.9 L632.8,612.8 L634.3,612.6 L635.8,612.5 L637.3,612.3 L638.8,612.2 L640.3,612.1 L641.8,611.9 L643.3,611.7 L644.8,611.6 L646.3,611.4 L647.8,611.3 L649.3,611.1 L650.8,611.0 L652.3,610.8 L653.8,610.6 L655.3,610.5 L656.8,610.3 L658.3,610.1 L659.8,610.0 L661.3,609.8 L662.8,609.6 L664.3,609.5 L665.8,609.3 L667.3,609.1 L668.8,608.9 L670.3,608.7 L671.8,608.6 L673.3,608.4 L674.8,608.2 L676.3,608.0 L677.8,607.8 L679.3,607.6 L680.8,607.4 L682.3,607.2 L683.8,607.1 L685.3,606.9 L686.8,606.7 L688.3,606.5 L689.8,606.3 L691.3,606.1 L692.8,605.9 L694.3,605.7 L695.8,605.5 L697.3,605.2 L698.8,605.0 L700.3,604.8 L701.8,604.6 L703.3,604.4 L704.8,604.2 L706.3,604.0 L707.8,603.8 L709.3,603.6 L710.8,603.3 L712.3,603.1 L713.8,602.9 L715.3,602.7 L716.8,602.5 L718.3,602.3 L719.8,602.1 L721.3,601.9 L722.8,601.7 L724.3,601.5 L725.8,601.3 L727.3,601.1 L728.8,600.9 L730.3,600.7 L731.8,600.5 L733.3,600.3 L734.8,600.1 L736.3,599.9 L737.8,599.8 L739.3,599.6 L740.8,599.4 L742.3,599.3 L743.8,599.1 L745.3,599.0 L746.8,598.8 L748.3,598.7 L749.8,598.5 L751.3,598.4 L752.8,598.3 L754.3,598.1 L755.8,598.0 L757.3,597.9 L758.8,597.8 L760.3,597.7 L761.8,597.6 L763.3,597.5 L764.8,597.4 L766.3,597.3 L767.8,597.2 L769.3,597.1 L770.8,597.0 L772.3,596.9 L773.8,596.9 L775.3,596.8 L776.8,596.7 L778.3,596.6 L779.8,596.5 L781.3,596.5 L782.8,596.4 L784.3,596.3 L785.8,596.2 L787.3,596.1 L788.8,596.1 L790.3,596.0 L791.8,595.9 L793.3,595.8 L794.8,595.8 L796.3,595.7 L797.8,595.6 L799.3,595.5 L800.8,595.4 L802.3,595.4 L803.8,595.3 L805.3,595.2 L806.8,595.1 L808.3,595.1 L809.8,595.0 L811.3,594.9 L812.8,594.8 L814.3,594.8 L815.8,594.7 L817.3,594.6 L818.8,594.5 L820.3,594.5 L821.8,594.4 L823.3,594.3 L824.8,594.2 L826.3,594.2 L827.8,594.1 L829.3,594.0 L830.8,593.9 L832.3,593.9 L833.8,593.8 L835.3,593.7 L836.8,593.6 L838.3,593.6 L839.8,593.5 L841.3,593.4 L842.8,593.3 L844.3,593.3 L845.8,593.2 L847.3,593.1 L848.8,593.0 L850.3,593.0 L851.8,592.9 L853.3,592.8 L854.8,592.7 L856.3,592.7 L857.8,592.6 L859.3,592.5 L860.8,592.4 L862.3,592.4 L863.8,592.3 L865.3,592.2 L866.8,592.1 L868.3,592.1 L869.8,592.0 L871.3,591.9 L872.8,591.8 L874.3,591.7 L875.8,591.7 L877.3,591.6 L878.8,591.5 L880.3,591.4 L881.8,591.4 L883.3,591.3 L884.8,591.2 L886.3,591.1 L887.8,591.1 L889.3,591.0 L890.8,590.9 L892.3,590.8 L893.8,590.7 L895.3,590.7 L896.8,590.6 L898.3,590.5 L899.8,590.4 L901.3,590.4 L902.8,590.3 L904.3,590.2 L905.8,590.1 L907.3,590.1 L908.8,590.0 L910.3,589.9 L911.8,589.8 L913.3,589.8 L914.8,589.7 L916.3,589.6 L917.8,589.6 L919.3,589.5 L920.8,589.4 L922.3,589.4 L923.8,589.3 L925.3,589.2 L926.8,589.2 L928.3,589.1 L929.8,589.1 L931.3,589.0 L932.8,588.9 L934.3,588.9 L935.8,588.8 L937.3,588.8 L938.8,588.7 L940.3,588.7 L941.8,588.6 L943.3,588.6 L944.8,588.6 L946.3,588.5 L947.8,588.5 L949.3,588.4 L950.8,588.4 L952.3,588.4 L953.8,588.3 L955.3,588.3 L956.8,588.2 L958.3,588.2 L959.8,588.2 L961.3,588.1 L962.8,588.1 L964.3,588.1 L965.8,588.0 L967.3,588.0 L968.8,587.9 L970.3,587.9 L971.8,587.9 L973.3,587.8 L974.8,587.8 L976.3,587.7 L977.8,587.7 L979.3,587.7 L980.8,587.6 L982.3,587.6 L983.8,587.6 L985.3,587.5 L986.8,587.5 L988.3,587.5 L989.8,587.4 L991.3,587.4 L992.8,587.4 L994.3,587.4 L995.8,587.3 L997.3,587.3 L998.8,587.3 L1000.3,587.3 L1001.8,587.3 L1003.3,587.3 L1004.8,587.3 L1006.3,587.3 L1007.8,587.3 L1009.3,587.3 L1010.8,587.4 L1012.3,587.4 L1013.8,587.4 L1015.3,587.5 L1016.8,587.5 L1018.3,587.6 L1019.8,587.6 L1021.3,587.7 L1022.8,587.7 L1024.3,587.8 L1025.8,587.9 L1027.3,587.9 L1028.8,588.0 L1030.3,588.1 L1031.8,588.2 L1033.3,588.3 L1034.8,588.4 L1036.3,588.5 L1037.8,588.5 L1039.3,588.6 L1040.8,588.7 L1042.3,588.8 L1043.8,588.9 L1045.3,589.0 L1046.8,589.1 L1048.3,589.2 L1049.8,589.3 L1051.3,589.4 L1052.8,589.5 L1054.3,589.6 L1055.8,589.7 L1057.3,589.7 L1058.8,589.8 L1060.3,589.9 L1061.8,589.9 L1063.3,589.9 L1064.8,589.9 L1066.3,590.0 L1067.8,590.0 L1069.3,590.0 L1070.8,590.0 L1072.3,590.0 L1073.8,590.0 L1075.3,589.9 L1076.8,589.9 L1078.3,589.9 L1079.8,589.8 L1081.3,589.8 L1082.8,589.8 L1084.3,589.7 L1085.8,589.7 L1087.3,589.7 L1088.8,589.6 L1090.3,589.6 L1091.8,589.5 L1093.3,589.5 L1094.8,589.4 L1096.3,589.4 L1097.8,589.4 L1099.3,589.3 L1100.8,589.3 L1102.3,589.3 L1103.8,589.2 L1105.3,589.2 L1106.8,589.2 L1108.3,589.1 L1109.8,589.1 L1111.3,589.1 L1112.8,589.1 L1114.3,589.1 L1115.8,589.1 L1117.3,589.1 L1118.8,589.0 L1120.3,589.0 L1121.8,589.0 L1123.3,589.0 L1124.8,589.0 L1126.3,589.0 L1127.8,589.0 L1129.3,589.0 L1130.8,589.0 L1132.3,589.0 L1133.8,589.0 L1135.3,589.0 L1136.8,589.0 L1138.3,589.0 L1139.8,589.0 L1141.3,589.0 L1142.8,589.0 L1144.3,589.0 L1145.8,589.0 L1147.3,589.0 L1148.8,588.9 L1150.3,588.9 L1151.8,588.9 L1153.3,588.9 L1154.8,588.9 L1156.3,588.9 L1157.8,588.9 L1159.3,588.9 L1160.8,588.8 L1162.3,588.8 L1163.8,588.8 L1165.3,588.8 L1166.8,588.7 L1168.3,588.7 L1169.8,588.7 L1171.3,588.7 L1172.8,588.6 L1174.3,588.6 L1175.8,588.6 L1177.3,588.5 L1178.8,588.5 L1180.3,588.5 L1181.8,588.5 L1183.3,588.4 L1184.5,588.4" fill="none" stroke="#ff3300" stroke-width="2.6" stroke-dasharray="2.5 2.4"/>
<path d="M504.2,650.8 L505.7,649.9 L507.2,649.1 L508.7,648.2 L510.2,647.4 L511.7,646.5 L513.2,645.7 L514.7,644.9 L516.2,644.2 L517.7,643.5 L519.2,642.8 L520.7,642.1 L522.2,641.5 L523.7,641.0 L525.2,640.5 L526.7,640.0 L528.2,639.6 L529.7,639.2 L531.2,638.9 L532.7,638.6 L534.2,638.4 L535.7,638.2 L537.2,638.0 L538.7,638.0 L540.2,637.9 L541.7,637.9 L543.2,637.9 L544.7,638.0 L546.2,638.0 L547.7,638.1 L549.2,638.2 L550.7,638.4 L552.2,638.5 L553.7,638.7 L555.2,638.8 L556.7,639.0 L558.2,639.2 L559.7,639.4 L561.2,639.5 L562.7,639.7 L564.2,639.9 L565.7,640.0 L567.2,640.2 L568.7,640.3 L570.2,640.5 L571.7,640.7 L573.2,640.8 L574.7,641.0 L576.2,641.2 L577.7,641.3 L579.2,641.5 L580.7,641.7 L582.2,641.9 L583.7,642.1 L585.2,642.3 L586.7,642.5 L588.2,642.7 L589.7,642.9 L591.2,643.2 L592.7,643.4 L594.2,643.7 L595.7,643.9 L597.2,644.1 L598.7,644.4 L600.2,644.6 L601.7,644.9 L603.2,645.2 L604.7,645.4 L606.2,645.7 L607.7,645.9 L609.2,646.2 L610.7,646.4 L612.2,646.6 L613.7,646.9 L615.2,647.1 L616.7,647.3 L618.2,647.5 L619.7,647.7 L621.2,647.9 L622.7,648.1 L624.2,648.3 L625.7,648.5 L627.2,648.6 L628.7,648.7 L630.2,648.9 L631.7,649.0 L633.2,649.1 L634.7,649.2 L636.2,649.3 L637.7,649.3 L639.2,649.4 L640.7,649.4 L642.2,649.5 L643.7,649.5 L645.2,649.5 L646.7,649.5 L648.2,649.5 L649.7,649.5 L651.2,649.5 L652.7,649.5 L654.2,649.5 L655.7,649.4 L657.2,649.4 L658.7,649.3 L660.2,649.3 L661.7,649.2 L663.2,649.2 L664.7,649.1 L666.2,649.1 L667.7,649.0 L669.2,648.9 L670.7,648.8 L672.2,648.8 L673.7,648.7 L675.2,648.6 L676.7,648.5 L678.2,648.4 L679.7,648.3 L681.2,648.3 L682.7,648.2 L684.2,648.1 L685.7,648.0 L687.2,647.9 L688.7,647.9 L690.2,647.8 L691.7,647.7 L693.2,647.6 L694.7,647.6 L696.2,647.5 L697.7,647.5 L699.2,647.4 L700.7,647.4 L702.2,647.3 L703.7,647.3 L705.2,647.3 L706.7,647.2 L708.2,647.2 L709.7,647.2 L711.2,647.2 L712.7,647.2 L714.2,647.2 L715.7,647.1 L717.2,647.1 L718.7,647.1 L720.2,647.1 L721.7,647.1 L723.2,647.1 L724.7,647.1 L726.2,647.1 L727.7,647.1 L729.2,647.1 L730.7,647.1 L732.2,647.1 L733.7,647.1 L735.2,647.1 L736.7,647.1 L738.2,647.1 L739.7,647.1 L741.2,647.1 L742.7,647.1 L744.2,647.1 L745.7,647.1 L747.2,647.0 L748.7,647.0 L750.2,647.0 L751.7,647.0 L753.2,647.0 L754.7,646.9 L756.2,646.9 L757.7,646.9 L759.2,646.9 L760.7,646.8 L762.2,646.8 L763.7,646.8 L765.2,646.7 L766.7,646.7 L768.2,646.6 L769.7,646.6 L771.2,646.5 L772.7,646.5 L774.2,646.4 L775.7,646.3 L777.2,646.3 L778.7,646.2 L780.2,646.1 L781.7,646.0 L783.2,646.0 L784.7,645.9 L786.2,645.8 L787.7,645.7 L789.2,645.6 L790.7,645.5 L792.2,645.4 L793.7,645.3 L795.2,645.2 L796.7,645.1 L798.2,645.0 L799.7,644.9 L801.2,644.8 L802.7,644.7 L804.2,644.5 L805.7,644.4 L807.2,644.3 L808.7,644.2 L810.2,644.0 L811.7,643.9 L813.2,643.8 L814.7,643.6 L816.2,643.5 L817.7,643.4 L819.2,643.2 L820.7,643.1 L822.2,643.0 L823.7,642.8 L825.2,642.7 L826.7,642.5 L828.2,642.4 L829.7,642.2 L831.2,642.1 L832.7,641.9 L834.2,641.8 L835.7,641.6 L837.2,641.4 L838.7,641.3 L840.2,641.1 L841.7,641.0 L843.2,640.8 L844.7,640.7 L846.2,640.5 L847.7,640.3 L849.2,640.2 L850.7,640.0 L852.2,639.9 L853.7,639.7 L855.2,639.5 L856.7,639.4 L858.2,639.2 L859.7,639.1 L861.2,638.9 L862.7,638.8 L864.2,638.6 L865.7,638.5 L867.2,638.3 L868.7,638.2 L870.2,638.0 L871.7,637.9 L873.2,637.7 L874.7,637.6 L876.2,637.4 L877.7,637.3 L879.2,637.2 L880.7,637.0 L882.2,636.9 L883.7,636.8 L885.2,636.6 L886.7,636.5 L888.2,636.4 L889.7,636.3 L891.2,636.2 L892.7,636.1 L894.2,635.9 L895.7,635.8 L897.2,635.7 L898.7,635.6 L900.2,635.5 L901.7,635.5 L903.2,635.4 L904.7,635.3 L906.2,635.2 L907.7,635.1 L909.2,635.0 L910.7,634.9 L912.2,634.9 L913.7,634.8 L915.2,634.7 L916.7,634.7 L918.2,634.6 L919.7,634.5 L921.2,634.5 L922.7,634.4 L924.2,634.4 L925.7,634.3 L927.2,634.2 L928.7,634.2 L930.2,634.2 L931.7,634.1 L933.2,634.1 L934.7,634.0 L936.2,634.0 L937.7,634.0 L939.2,633.9 L940.7,633.9 L942.2,633.9 L943.7,633.8 L945.2,633.8 L946.7,633.8 L948.2,633.8 L949.7,633.7 L951.2,633.7 L952.7,633.7 L954.2,633.7 L955.7,633.7 L957.2,633.6 L958.7,633.6 L960.2,633.6 L961.7,633.6 L963.2,633.6 L964.7,633.6 L966.2,633.6 L967.7,633.6 L969.2,633.5 L970.7,633.5 L972.2,633.5 L973.7,633.5 L975.2,633.5 L976.7,633.5 L978.2,633.5 L979.7,633.5 L981.2,633.4 L982.7,633.4 L984.2,633.4 L985.7,633.4 L987.2,633.4 L988.7,633.4 L990.2,633.3 L991.7,633.3 L993.2,633.3 L994.7,633.3 L996.2,633.2 L997.7,633.2 L999.2,633.2 L1000.7,633.2 L1002.2,633.2 L1003.7,633.1 L1005.2,633.1 L1006.7,633.1 L1008.2,633.1 L1009.7,633.0 L1011.2,633.0 L1012.7,633.0 L1014.2,633.0 L1015.7,633.0 L1017.2,632.9 L1018.7,632.9 L1020.2,632.9 L1021.7,632.9 L1023.2,632.9 L1024.7,632.9 L1026.2,632.8 L1027.7,632.8 L1029.2,632.8 L1030.7,632.8 L1032.2,632.8 L1033.7,632.8 L1035.2,632.8 L1036.7,632.8 L1038.2,632.8 L1039.7,632.8 L1041.2,632.8 L1042.7,632.8 L1044.2,632.8 L1045.7,632.8 L1047.2,632.8 L1048.7,632.9 L1050.2,632.9 L1051.7,632.9 L1053.2,632.9 L1054.7,632.9 L1056.2,633.0 L1057.7,633.0 L1059.2,633.0 L1060.7,633.0 L1062.2,633.1 L1063.7,633.1 L1065.2,633.1 L1066.7,633.1 L1068.2,633.2 L1069.7,633.2 L1071.2,633.2 L1072.7,633.2 L1074.2,633.3 L1075.7,633.3 L1077.2,633.3 L1078.7,633.3 L1080.2,633.3 L1081.7,633.4 L1083.2,633.4 L1084.7,633.4 L1086.2,633.4 L1087.7,633.4 L1089.2,633.4 L1090.7,633.4 L1092.2,633.4 L1093.7,633.4 L1095.2,633.4 L1096.7,633.4 L1098.2,633.4 L1099.7,633.4 L1101.2,633.4 L1102.7,633.4 L1104.2,633.4 L1105.7,633.3 L1107.2,633.3 L1108.7,633.3 L1110.2,633.2 L1111.7,633.2 L1113.2,633.2 L1114.7,633.1 L1116.2,633.1 L1117.7,633.1 L1119.2,633.0 L1120.7,633.0 L1122.2,632.9 L1123.7,632.9 L1125.2,632.8 L1126.7,632.8 L1128.2,632.7 L1129.7,632.7 L1131.2,632.6 L1132.7,632.6 L1134.2,632.5 L1135.7,632.5 L1137.2,632.4 L1138.7,632.4 L1140.2,632.3 L1141.7,632.3 L1143.2,632.2 L1144.7,632.1 L1146.2,632.1 L1147.7,632.0 L1149.2,632.0 L1150.7,631.9 L1152.2,631.9 L1153.7,631.8 L1155.2,631.8 L1156.7,631.7 L1158.2,631.7 L1159.7,631.6 L1161.2,631.6 L1162.7,631.5 L1164.2,631.5 L1165.7,631.5 L1167.2,631.4 L1168.7,631.4 L1170.2,631.4 L1171.7,631.3 L1173.2,631.3 L1174.7,631.3 L1176.2,631.2 L1177.7,631.2 L1179.2,631.2 L1180.7,631.2 L1182.2,631.1 L1183.7,631.1 L1185.2,631.1 L1186.7,631.1 L1188.2,631.1 L1189.7,631.1 L1191.2,631.1 L1192.7,631.0 L1194.2,631.0 L1195.7,631.0 L1197.2,631.0 L1198.7,631.0 L1200.2,631.0 L1201.7,631.0 L1203.2,631.0 L1204.7,631.0 L1206.2,631.0 L1207.7,631.0 L1209.2,631.0 L1210.7,631.0 L1212.2,631.0 L1213.7,631.0 L1215.2,631.0 L1216.7,631.0 L1218.2,631.0 L1219.7,631.0 L1221.2,631.0 L1222.7,631.0 L1224.2,631.0 L1225.7,631.0 L1227.2,631.1 L1228.7,631.1 L1230.2,631.1 L1231.7,631.1 L1233.2,631.1 L1234.7,631.1 L1236.2,631.1 L1237.7,631.1 L1239.2,631.1 L1240.7,631.2 L1242.2,631.2 L1243.7,631.2 L1245.2,631.2 L1246.7,631.2 L1247.0,631.2" fill="none" stroke="#0864c8" stroke-width="2.6" stroke-dasharray="2.5 2.4"/>
<path d="M367.3,678.0 L368.8,677.9 L370.3,677.8 L371.8,677.7 L373.3,677.6 L374.8,677.5 L376.3,677.4 L377.8,677.3 L379.3,677.3 L380.8,677.2 L382.3,677.2 L383.8,677.1 L385.3,677.1 L386.8,677.1 L388.3,677.1 L389.8,677.1 L391.3,677.1 L392.8,677.2 L394.3,677.3 L395.8,677.3 L397.3,677.5 L398.8,677.6 L400.3,677.7 L401.8,677.9 L403.3,678.1 L404.8,678.3 L406.3,678.5 L407.8,678.7 L409.3,678.9 L410.8,679.2 L412.3,679.4 L413.8,679.6 L415.3,679.8 L416.8,680.0 L418.3,680.2 L419.8,680.4 L421.3,680.6 L422.8,680.8 L424.3,681.0 L425.8,681.2 L427.3,681.3 L428.8,681.5 L430.3,681.7 L431.8,681.8 L433.3,682.0 L434.8,682.2 L436.3,682.3 L437.8,682.5 L439.3,682.7 L440.8,682.8 L442.3,683.0 L443.8,683.1 L445.3,683.3 L446.8,683.5 L448.3,683.6 L449.8,683.8 L451.3,683.9 L452.8,684.1 L454.3,684.2 L455.8,684.3 L457.3,684.4 L458.8,684.6 L460.3,684.7 L461.8,684.7 L463.3,684.8 L464.8,684.9 L466.3,684.9 L467.8,684.9 L469.3,685.0 L470.8,685.0 L472.3,685.0 L473.8,685.0 L475.3,685.0 L476.8,685.0 L478.3,684.9 L479.8,684.9 L481.3,684.9 L482.8,684.9 L484.3,684.8 L485.8,684.8 L487.3,684.8 L488.8,684.8 L490.3,684.8 L491.8,684.8 L493.3,684.8 L494.8,684.8 L496.3,684.9 L497.8,684.9 L499.3,685.0 L500.8,685.1 L502.3,685.2 L503.8,685.3 L505.3,685.4 L506.8,685.6 L508.3,685.8 L509.8,686.0 L511.3,686.2 L512.8,686.4 L514.3,686.6 L515.8,686.8 L517.3,687.0 L518.8,687.2 L520.3,687.4 L521.8,687.5 L523.3,687.6 L524.8,687.7 L526.3,687.7 L527.8,687.8 L529.3,687.8 L530.8,687.7 L532.3,687.7 L533.8,687.6 L535.3,687.6 L536.8,687.5 L538.3,687.3 L539.8,687.2 L541.3,687.1 L542.8,686.9 L544.3,686.7 L545.8,686.5 L547.3,686.4 L548.8,686.2 L550.3,686.0 L551.8,685.8 L553.3,685.6 L554.8,685.4 L556.3,685.2 L557.8,685.0 L559.3,684.9 L560.8,684.7 L562.3,684.6 L563.8,684.5 L565.3,684.3 L566.8,684.2 L568.3,684.2 L569.8,684.1 L571.3,684.0 L572.8,683.9 L574.3,683.9 L575.8,683.9 L577.3,683.8 L578.8,683.8 L580.3,683.8 L581.8,683.8 L583.3,683.8 L584.8,683.9 L586.3,683.9 L587.8,683.9 L589.3,684.0 L590.8,684.0 L592.3,684.1 L593.8,684.2 L595.3,684.3 L596.8,684.4 L598.3,684.5 L599.8,684.7 L601.3,684.8 L602.8,685.0 L604.3,685.2 L605.8,685.4 L607.3,685.6 L608.8,685.9 L610.3,686.2 L611.8,686.4 L613.3,686.7 L614.8,687.1 L616.3,687.4 L617.8,687.7 L619.3,688.0 L620.8,688.4 L622.3,688.7 L623.8,689.1 L625.3,689.4 L626.8,689.8 L628.3,690.1 L629.8,690.5 L631.3,690.8 L632.8,691.2 L634.3,691.5 L635.8,691.8 L637.3,692.1 L638.8,692.4 L640.3,692.7 L641.8,693.0 L643.3,693.3 L644.8,693.5 L646.3,693.7 L647.8,693.9 L649.3,694.1 L650.8,694.3 L652.3,694.4 L653.8,694.6 L655.3,694.7 L656.8,694.8 L658.3,694.8 L659.8,694.9 L661.3,694.9 L662.8,694.9 L664.3,694.9 L665.8,694.9 L667.3,694.8 L668.8,694.8 L670.3,694.7 L671.8,694.6 L673.3,694.6 L674.8,694.5 L676.3,694.4 L677.8,694.4 L679.3,694.3 L680.8,694.3 L682.3,694.2 L683.8,694.2 L685.3,694.2 L686.8,694.2 L688.3,694.2 L689.8,694.3 L691.3,694.4 L692.8,694.5 L694.3,694.6 L695.8,694.8 L697.3,695.0 L698.8,695.2 L700.3,695.5 L701.8,695.8 L703.3,696.1 L704.8,696.4 L706.3,696.8 L707.8,697.1 L709.3,697.5 L710.8,697.9 L712.3,698.4 L713.8,698.8 L715.3,699.2 L716.8,699.7 L718.3,700.1 L719.8,700.6 L721.3,701.0 L722.8,701.4 L724.3,701.9 L725.8,702.3 L727.3,702.7 L728.8,703.0 L730.3,703.4 L731.8,703.7 L733.3,704.0 L734.8,704.3 L736.3,704.5 L737.8,704.7 L739.3,704.9 L740.8,705.0 L742.3,705.1 L743.8,705.2 L745.3,705.2 L746.8,705.2 L748.3,705.1 L749.8,705.0 L751.3,704.9 L752.8,704.7 L754.3,704.4 L755.8,704.2 L757.3,703.9 L758.8,703.6 L760.3,703.2 L761.8,702.9 L763.3,702.5 L764.8,702.1 L766.3,701.7 L767.8,701.2 L769.3,700.8 L770.8,700.4 L772.3,699.9 L773.8,699.5 L775.3,699.0 L776.8,698.6 L778.3,698.2 L779.8,697.7 L781.3,697.3 L782.8,696.9 L784.3,696.5 L785.8,696.1 L787.3,695.7 L788.8,695.4 L790.3,695.0 L791.8,694.6 L793.3,694.3 L794.8,693.9 L796.3,693.5 L797.8,693.2 L799.3,692.8 L800.8,692.4 L802.3,692.1 L803.8,691.7 L805.3,691.4 L806.8,691.0 L808.3,690.7 L809.8,690.3 L811.3,689.9 L812.8,689.6 L814.3,689.2 L815.8,688.8 L817.3,688.5 L818.8,688.2 L820.3,687.8 L821.8,687.5 L823.3,687.3 L824.8,687.0 L826.3,686.8 L827.8,686.6 L829.3,686.5 L830.8,686.4 L832.3,686.3 L833.8,686.3 L835.3,686.4 L836.8,686.5 L838.3,686.6 L839.8,686.8 L841.3,687.1 L842.8,687.4 L844.3,687.8 L845.8,688.3 L847.3,688.9 L848.8,689.5 L850.3,690.1 L851.8,690.8 L853.3,691.4 L854.8,692.1 L856.3,692.8 L857.8,693.4 L859.3,694.0 L860.8,694.5 L862.3,695.0 L863.8,695.4 L865.3,695.7 L866.8,695.9 L868.3,696.0 L869.8,695.9 L871.3,695.6 L872.8,695.2 L874.3,694.4 L875.8,693.3 L877.3,691.7 L878.8,689.7 L880.3,687.2 L881.8,684.2 L883.3,681.1 L884.8,677.8 L886.3,674.8 L887.8,672.2 L889.3,670.0 L890.8,668.2 L892.3,666.8 L893.8,665.8 L895.3,665.1 L896.8,664.7 L898.3,664.5 L899.8,664.5 L901.3,664.7 L902.8,665.1 L904.3,665.6 L905.8,666.2 L907.3,666.9 L908.8,667.7 L910.3,668.6 L911.8,669.6 L913.3,670.6 L914.8,671.7 L916.3,672.7 L917.8,673.8 L919.3,674.9 L920.8,676.0 L922.3,677.1 L923.8,678.2 L925.3,679.4 L926.8,680.5 L928.3,681.7 L929.8,682.9 L931.3,684.1 L932.8,685.3 L934.3,686.6 L935.8,687.8 L937.3,689.0 L938.8,690.2 L940.3,691.4 L941.8,692.5 L943.3,693.6 L944.8,694.6 L946.3,695.5 L947.8,696.3 L949.3,697.1 L950.8,697.7 L952.3,698.3 L953.8,698.7 L955.3,699.1 L956.8,699.4 L958.3,699.6 L959.8,699.7 L961.3,699.8 L962.8,699.8 L964.3,699.7 L965.8,699.6 L967.3,699.4 L968.8,699.1 L970.3,698.8 L971.8,698.5 L973.3,698.2 L974.8,697.8 L976.3,697.4 L977.8,697.0 L979.3,696.5 L980.8,696.1 L982.3,695.7 L983.8,695.3 L985.3,694.9 L986.8,694.5 L988.3,694.1 L989.8,693.7 L991.3,693.4 L992.8,693.1 L994.3,692.8 L995.8,692.5 L997.3,692.2 L998.8,692.0 L1000.3,691.8 L1001.8,691.6 L1003.3,691.4 L1004.8,691.2 L1006.3,691.0 L1007.8,690.9 L1009.3,690.8 L1010.8,690.7 L1012.3,690.6 L1013.8,690.6 L1015.3,690.5 L1016.8,690.5 L1018.3,690.5 L1019.8,690.6 L1021.3,690.6 L1022.8,690.7 L1024.3,690.8 L1025.8,690.9 L1027.3,691.0 L1028.8,691.2 L1030.3,691.3 L1031.8,691.5 L1033.3,691.7 L1034.8,692.0 L1036.3,692.2 L1037.8,692.5 L1039.3,692.7 L1040.8,693.0 L1042.3,693.3 L1043.8,693.5 L1045.3,693.8 L1046.8,694.1 L1048.3,694.4 L1049.8,694.6 L1051.3,694.9 L1052.8,695.2 L1054.3,695.4 L1055.8,695.6 L1057.3,695.9 L1058.8,696.1 L1060.3,696.3 L1061.8,696.5 L1063.3,696.7 L1064.8,696.8 L1066.3,697.0 L1067.8,697.1 L1069.3,697.3 L1070.8,697.4 L1072.3,697.5 L1073.8,697.6 L1075.3,697.7 L1076.8,697.8 L1078.3,697.9 L1079.8,697.9 L1081.3,697.9 L1082.8,698.0 L1084.3,698.0 L1085.8,698.0 L1087.3,698.0 L1088.8,698.0 L1090.3,697.9 L1091.8,697.9 L1093.3,697.8 L1094.8,697.8 L1096.3,697.7 L1097.8,697.7 L1099.3,697.6 L1100.8,697.6 L1102.3,697.5 L1103.8,697.5 L1105.3,697.5 L1106.8,697.5 L1108.3,697.5 L1109.8,697.5 L1111.3,697.5 L1112.8,697.6 L1114.3,697.6 L1115.8,697.7 L1117.3,697.9 L1118.8,698.0 L1120.3,698.2 L1121.8,698.3 L1123.3,698.5 L1124.8,698.7 L1126.3,698.9 L1127.8,699.1 L1129.3,699.3 L1130.8,699.5 L1132.3,699.7 L1133.8,699.9 L1135.3,700.1 L1136.8,700.3 L1138.3,700.5 L1139.8,700.6 L1141.3,700.8 L1142.8,700.9 L1144.3,701.1 L1145.8,701.2 L1147.3,701.3 L1148.8,701.3 L1150.3,701.4 L1151.8,701.4 L1153.3,701.4 L1154.8,701.3 L1156.3,701.2 L1157.8,701.1 L1159.3,701.0 L1160.8,700.8 L1162.3,700.6 L1163.8,700.4 L1165.3,700.1 L1166.8,699.8 L1168.3,699.5 L1169.8,699.2 L1171.3,698.9 L1172.8,698.5 L1174.3,698.2 L1175.8,697.8 L1177.3,697.4 L1178.8,697.0 L1180.3,696.6 L1181.8,696.2 L1183.3,695.8 L1184.8,695.3 L1186.3,694.9" fill="none" stroke="#ff3300" stroke-width="2.6"/>
<path d="M504.2,681.1 L505.7,680.7 L507.2,680.2 L508.7,679.8 L510.2,679.3 L511.7,678.9 L513.2,678.5 L514.7,678.1 L516.2,677.7 L517.7,677.3 L519.2,677.0 L520.7,676.6 L522.2,676.3 L523.7,676.0 L525.2,675.7 L526.7,675.4 L528.2,675.2 L529.7,675.0 L531.2,674.8 L532.7,674.7 L534.2,674.6 L535.7,674.5 L537.2,674.5 L538.7,674.5 L540.2,674.5 L541.7,674.6 L543.2,674.7 L544.7,674.8 L546.2,675.0 L547.7,675.2 L549.2,675.4 L550.7,675.7 L552.2,676.0 L553.7,676.3 L555.2,676.6 L556.7,677.0 L558.2,677.4 L559.7,677.7 L561.2,678.1 L562.7,678.5 L564.2,678.9 L565.7,679.2 L567.2,679.6 L568.7,680.0 L570.2,680.4 L571.7,680.7 L573.2,681.1 L574.7,681.4 L576.2,681.8 L577.7,682.1 L579.2,682.4 L580.7,682.6 L582.2,682.9 L583.7,683.1 L585.2,683.3 L586.7,683.5 L588.2,683.6 L589.7,683.7 L591.2,683.8 L592.7,683.9 L594.2,683.9 L595.7,684.0 L597.2,684.0 L598.7,684.0 L600.2,684.0 L601.7,684.0 L603.2,684.0 L604.7,683.9 L606.2,683.9 L607.7,683.9 L609.2,683.9 L610.7,683.9 L612.2,683.9 L613.7,684.0 L615.2,684.0 L616.7,684.1 L618.2,684.2 L619.7,684.4 L621.2,684.5 L622.7,684.7 L624.2,684.9 L625.7,685.2 L627.2,685.5 L628.7,685.8 L630.2,686.1 L631.7,686.5 L633.2,686.9 L634.7,687.3 L636.2,687.7 L637.7,688.1 L639.2,688.4 L640.7,688.8 L642.2,689.2 L643.7,689.6 L645.2,689.9 L646.7,690.3 L648.2,690.6 L649.7,690.8 L651.2,691.1 L652.7,691.3 L654.2,691.4 L655.7,691.5 L657.2,691.6 L658.7,691.6 L660.2,691.6 L661.7,691.5 L663.2,691.4 L664.7,691.2 L666.2,691.1 L667.7,690.9 L669.2,690.7 L670.7,690.4 L672.2,690.2 L673.7,689.9 L675.2,689.7 L676.7,689.4 L678.2,689.2 L679.7,688.9 L681.2,688.7 L682.7,688.5 L684.2,688.3 L685.7,688.1 L687.2,688.0 L688.7,687.9 L690.2,687.8 L691.7,687.8 L693.2,687.7 L694.7,687.7 L696.2,687.8 L697.7,687.8 L699.2,687.9 L700.7,688.0 L702.2,688.0 L703.7,688.1 L705.2,688.2 L706.7,688.3 L708.2,688.3 L709.7,688.4 L711.2,688.4 L712.7,688.5 L714.2,688.5 L715.7,688.5 L717.2,688.4 L718.7,688.4 L720.2,688.3 L721.7,688.2 L723.2,688.1 L724.7,687.9 L726.2,687.8 L727.7,687.6 L729.2,687.4 L730.7,687.2 L732.2,687.0 L733.7,686.7 L735.2,686.5 L736.7,686.3 L738.2,686.0 L739.7,685.8 L741.2,685.5 L742.7,685.2 L744.2,685.0 L745.7,684.7 L747.2,684.4 L748.7,684.1 L750.2,683.9 L751.7,683.6 L753.2,683.4 L754.7,683.1 L756.2,682.9 L757.7,682.6 L759.2,682.4 L760.7,682.2 L762.2,682.0 L763.7,681.9 L765.2,681.7 L766.7,681.5 L768.2,681.4 L769.7,681.3 L771.2,681.2 L772.7,681.2 L774.2,681.1 L775.7,681.1 L777.2,681.1 L778.7,681.2 L780.2,681.2 L781.7,681.3 L783.2,681.4 L784.7,681.5 L786.2,681.7 L787.7,681.8 L789.2,682.0 L790.7,682.2 L792.2,682.4 L793.7,682.5 L795.2,682.7 L796.7,682.9 L798.2,683.1 L799.7,683.3 L801.2,683.5 L802.7,683.7 L804.2,683.9 L805.7,684.1 L807.2,684.2 L808.7,684.4 L810.2,684.5 L811.7,684.6 L813.2,684.7 L814.7,684.7 L816.2,684.8 L817.7,684.8 L819.2,684.8 L820.7,684.7 L822.2,684.7 L823.7,684.6 L825.2,684.5 L826.7,684.4 L828.2,684.2 L829.7,684.1 L831.2,683.9 L832.7,683.7 L834.2,683.6 L835.7,683.4 L837.2,683.2 L838.7,683.0 L840.2,682.8 L841.7,682.5 L843.2,682.3 L844.7,682.1 L846.2,681.9 L847.7,681.7 L849.2,681.5 L850.7,681.4 L852.2,681.2 L853.7,681.0 L855.2,680.9 L856.7,680.8 L858.2,680.7 L859.7,680.6 L861.2,680.5 L862.7,680.5 L864.2,680.5 L865.7,680.5 L867.2,680.5 L868.7,680.6 L870.2,680.7 L871.7,680.8 L873.2,680.9 L874.7,681.1 L876.2,681.4 L877.7,681.6 L879.2,681.9 L880.7,682.3 L882.2,682.7 L883.7,683.1 L885.2,683.5 L886.7,684.0 L888.2,684.4 L889.7,684.9 L891.2,685.3 L892.7,685.8 L894.2,686.2 L895.7,686.6 L897.2,686.9 L898.7,687.2 L900.2,687.5 L901.7,687.7 L903.2,687.8 L904.7,687.9 L906.2,687.8 L907.7,687.7 L909.2,687.6 L910.7,687.3 L912.2,687.0 L913.7,686.5 L915.2,686.1 L916.7,685.5 L918.2,684.9 L919.7,684.2 L921.2,683.5 L922.7,682.8 L924.2,682.0 L925.7,681.2 L927.2,680.4 L928.7,679.7 L930.2,678.9 L931.7,678.2 L933.2,677.6 L934.7,677.0 L936.2,676.4 L937.7,675.9 L939.2,675.6 L940.7,675.3 L942.2,675.1 L943.7,675.1 L945.2,675.1 L946.7,675.3 L948.2,675.6 L949.7,676.0 L951.2,676.4 L952.7,676.9 L954.2,677.5 L955.7,678.1 L957.2,678.7 L958.7,679.4 L960.2,680.1 L961.7,680.8 L963.2,681.5 L964.7,682.1 L966.2,682.7 L967.7,683.3 L969.2,683.9 L970.7,684.3 L972.2,684.7 L973.7,685.1 L975.2,685.3 L976.7,685.5 L978.2,685.6 L979.7,685.6 L981.2,685.6 L982.7,685.5 L984.2,685.4 L985.7,685.2 L987.2,685.0 L988.7,684.7 L990.2,684.4 L991.7,684.1 L993.2,683.8 L994.7,683.4 L996.2,683.0 L997.7,682.6 L999.2,682.2 L1000.7,681.8 L1002.2,681.4 L1003.7,681.1 L1005.2,680.7 L1006.7,680.3 L1008.2,680.0 L1009.7,679.7 L1011.2,679.4 L1012.7,679.1 L1014.2,678.8 L1015.7,678.6 L1017.2,678.4 L1018.7,678.2 L1020.2,678.0 L1021.7,677.9 L1023.2,677.8 L1024.7,677.7 L1026.2,677.7 L1027.7,677.7 L1029.2,677.7 L1030.7,677.8 L1032.2,678.0 L1033.7,678.1 L1035.2,678.3 L1036.7,678.6 L1038.2,678.9 L1039.7,679.2 L1041.2,679.5 L1042.7,679.9 L1044.2,680.3 L1045.7,680.7 L1047.2,681.1 L1048.7,681.6 L1050.2,682.1 L1051.7,682.5 L1053.2,683.0 L1054.7,683.5 L1056.2,684.0 L1057.7,684.5 L1059.2,685.0 L1060.7,685.5 L1062.2,686.0 L1063.7,686.4 L1065.2,686.9 L1066.7,687.3 L1068.2,687.6 L1069.7,688.0 L1071.2,688.3 L1072.7,688.5 L1074.2,688.7 L1075.7,688.9 L1077.2,689.0 L1078.7,689.0 L1080.2,688.9 L1081.7,688.9 L1083.2,688.7 L1084.7,688.6 L1086.2,688.5 L1087.7,688.3 L1089.2,688.2 L1090.7,688.1 L1092.2,688.0 L1093.7,687.9 L1095.2,688.0 L1096.7,688.0 L1098.2,688.2 L1099.7,688.3 L1101.2,688.6 L1102.7,688.9 L1104.2,689.2 L1105.7,689.5 L1107.2,689.9 L1108.7,690.3 L1110.2,690.7 L1111.7,691.1 L1113.2,691.5 L1114.7,691.9 L1116.2,692.3 L1117.7,692.7 L1119.2,693.1 L1120.7,693.5 L1122.2,693.8 L1123.7,694.1 L1125.2,694.4 L1126.7,694.6 L1128.2,694.7 L1129.7,694.8 L1131.2,694.9 L1132.7,694.9 L1134.2,694.8 L1135.7,694.6 L1137.2,694.4 L1138.7,694.1 L1140.2,693.8 L1141.7,693.4 L1143.2,693.0 L1144.7,692.6 L1146.2,692.1 L1147.7,691.7 L1149.2,691.2 L1150.7,690.8 L1152.2,690.3 L1153.7,689.9 L1155.2,689.4 L1156.7,689.0 L1158.2,688.7 L1159.7,688.4 L1161.2,688.1 L1162.7,687.9 L1164.2,687.7 L1165.7,687.7 L1167.2,687.7 L1168.7,687.7 L1170.2,687.9 L1171.7,688.1 L1173.2,688.3 L1174.7,688.6 L1176.2,689.0 L1177.7,689.3 L1179.2,689.7 L1180.7,690.2 L1182.2,690.6 L1183.7,691.1 L1185.2,691.6 L1186.7,692.1 L1188.2,692.5 L1189.7,693.0 L1191.2,693.4 L1192.7,693.8 L1194.2,694.2 L1195.7,694.5 L1197.2,694.8 L1198.7,695.1 L1200.2,695.3 L1201.7,695.4 L1203.2,695.6 L1204.7,695.7 L1206.2,695.7 L1207.7,695.8 L1209.2,695.8 L1210.7,695.8 L1212.2,695.8 L1213.7,695.8 L1215.2,695.9 L1216.7,695.9 L1218.2,695.8 L1219.7,695.8 L1221.2,695.8 L1222.7,695.8 L1224.2,695.8 L1225.7,695.7 L1227.2,695.7 L1228.7,695.7 L1230.2,695.6 L1231.7,695.6 L1233.2,695.5 L1234.7,695.5 L1236.2,695.4 L1237.7,695.4 L1239.2,695.3 L1240.7,695.2 L1242.2,695.2 L1243.7,695.1 L1245.2,695.1 L1246.7,695.0 L1248.2,694.9 L1248.8,694.9" fill="none" stroke="#0864c8" stroke-width="2.6"/>
</svg>
</body></html>
